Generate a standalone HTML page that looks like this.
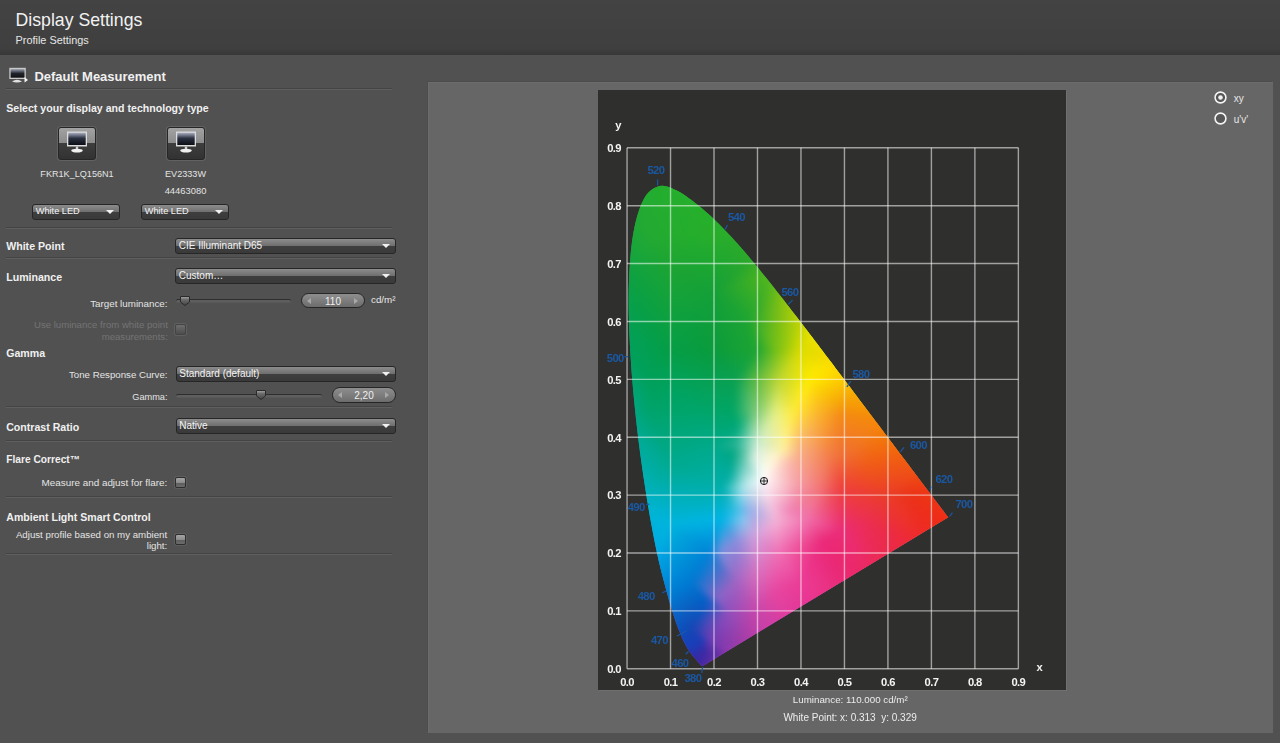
<!DOCTYPE html>
<html><head><meta charset="utf-8"><style>
html,body{margin:0;padding:0;width:1280px;height:743px;overflow:hidden;background:#515151;position:relative;font-family:"Liberation Sans",sans-serif}
.t{position:absolute;white-space:nowrap}
.dd{position:absolute;border:1px solid #262626;border-radius:3px;background:linear-gradient(#8c8c8c 0%,#6e6e6e 50%,#3e3e3e 51%,#3a3a3a 100%)}
.arr{position:absolute;width:0;height:0;border-left:4px solid transparent;border-right:4px solid transparent;border-top:4.5px solid #f0f0f0}
.spin{position:absolute;border:1px solid #262626;background:linear-gradient(#8e8e8e,#6c6c6c)}
.sarr{position:absolute;width:0;height:0;border-top:3px solid transparent;border-bottom:3px solid transparent}
.sarr.l{border-right:4px solid #a8a8a8}
.sarr.r{border-left:4px solid #a8a8a8}
.cb{position:absolute;width:9px;height:9px;border:1px solid #2e2e2e;border-radius:2px;background:linear-gradient(#a4a4a4 0%,#8c8c8c 50%,#5c5c5c 52%,#6c6c6c 100%);box-shadow:0 0 0 1px #5e5e5e}
</style></head><body>
<div style="position:absolute;left:0;top:0;width:1280px;height:55px;background:linear-gradient(#434343,#3f3f3f 88%,#373737)"></div><div class="t" style="left:15.50px;top:11.72px;font-size:17.7px;line-height:17.7px;color:#f2f2f2;">Display Settings</div>
<div class="t" style="left:15.50px;top:34.77px;font-size:10.9px;line-height:10.9px;color:#e6e6e6;">Profile Settings</div>
<svg style="position:absolute;left:8px;top:66px" width="22" height="18" viewBox="0 0 22 18">
<defs><linearGradient id="ms" x1="0" y1="0" x2="0" y2="1"><stop offset="0" stop-color="#9aa0b0"/><stop offset="0.5" stop-color="#22242c"/><stop offset="1" stop-color="#101014"/></linearGradient></defs>
<rect x="1.3" y="1.8" width="16.5" height="11.2" fill="#c8c8c8"/>
<rect x="2.6" y="3.1" width="13.9" height="8.6" fill="url(#ms)"/>
<path d="M4 15.5 Q9 12 14 15.5 Q9 17.5 4 15.5Z" fill="#e0e0e0"/>
<path d="M16.5 11 L20 14 L16.5 16.5Z" fill="#f4f4f4"/>
</svg><div class="t" style="left:34.40px;top:69.80px;font-size:13.0px;line-height:13.0px;color:#f0f0f0;font-weight:bold;">Default Measurement</div>
<div style="position:absolute;left:6px;top:88px;width:386px;height:1px;background:#444"></div><div style="position:absolute;left:6px;top:89px;width:386px;height:1px;background:#5f5f5f"></div>
<div class="t" style="left:6.20px;top:102.83px;font-size:10.6px;line-height:10.6px;color:#f0f0f0;font-weight:bold;">Select your display and technology type</div>
<div style="position:absolute;left:58px;top:127px;width:36px;height:31px;border:1px solid #262626;border-radius:3px;background:linear-gradient(#a2a2a2 0%,#8c8c8c 47%,#3e3e3e 48%,#323232 100%);box-shadow:0 0 0 1px #626262"></div>
<svg style="position:absolute;left:58px;top:127px" width="38" height="33" viewBox="0 0 38 33">
<defs><linearGradient id="scr58" x1="0" y1="0" x2="0" y2="1"><stop offset="0" stop-color="#a8acc0"/><stop offset="0.45" stop-color="#2a3040"/><stop offset="1" stop-color="#0c0e16"/></linearGradient></defs>
<rect x="9" y="4.5" width="20" height="15" fill="#dcdcdc"/>
<rect x="10.3" y="5.8" width="17.4" height="12.2" fill="url(#scr58)"/>
<rect x="17.8" y="19.5" width="2.4" height="3" fill="#d0d0d0"/>
<ellipse cx="19" cy="23.6" rx="5.8" ry="1.9" fill="#f0f0f0"/>
</svg>
<div style="position:absolute;left:167px;top:127px;width:36px;height:31px;border:1px solid #262626;border-radius:3px;background:linear-gradient(#a2a2a2 0%,#8c8c8c 47%,#3e3e3e 48%,#323232 100%);box-shadow:0 0 0 1px #626262"></div>
<svg style="position:absolute;left:167px;top:127px" width="38" height="33" viewBox="0 0 38 33">
<defs><linearGradient id="scr167" x1="0" y1="0" x2="0" y2="1"><stop offset="0" stop-color="#a8acc0"/><stop offset="0.45" stop-color="#2a3040"/><stop offset="1" stop-color="#0c0e16"/></linearGradient></defs>
<rect x="9" y="4.5" width="20" height="15" fill="#dcdcdc"/>
<rect x="10.3" y="5.8" width="17.4" height="12.2" fill="url(#scr167)"/>
<rect x="17.8" y="19.5" width="2.4" height="3" fill="#d0d0d0"/>
<ellipse cx="19" cy="23.6" rx="5.8" ry="1.9" fill="#f0f0f0"/>
</svg>
<div class="t" style="left:-123.00px;width:400px;text-align:center;top:169.50px;font-size:9.1px;line-height:9.1px;color:#e4e4e4;">FKR1K_LQ156N1</div>
<div class="t" style="left:-14.50px;width:400px;text-align:center;top:169.50px;font-size:9.1px;line-height:9.1px;color:#e4e4e4;">EV2333W</div>
<div class="t" style="left:-14.50px;width:400px;text-align:center;top:185.74px;font-size:9.4px;line-height:9.4px;color:#e4e4e4;">44463080</div>
<div class="dd" style="left:32px;top:203.5px;width:86px;height:14.0px"></div>
<div class="t" style="left:35.80px;top:207.23px;font-size:9.2px;line-height:9.2px;color:#f4f4f4;">White LED</div>
<div class="arr" style="left:106px;top:209.5px"></div>
<div class="dd" style="left:141px;top:203.5px;width:86px;height:14.0px"></div>
<div class="t" style="left:144.80px;top:207.23px;font-size:9.2px;line-height:9.2px;color:#f4f4f4;">White LED</div>
<div class="arr" style="left:215px;top:209.5px"></div>
<div style="position:absolute;left:6px;top:226.5px;width:386px;height:1px;background:#444"></div><div style="position:absolute;left:6px;top:227.5px;width:386px;height:1px;background:#5f5f5f"></div>
<div class="t" style="left:6.20px;top:241.33px;font-size:10.6px;line-height:10.6px;color:#f0f0f0;font-weight:bold;">White Point</div>
<div class="dd" style="left:175px;top:238px;width:219px;height:14px"></div>
<div class="t" style="left:178.80px;top:241.06px;font-size:10px;line-height:10px;color:#f4f4f4;">CIE Illuminant D65</div>
<div class="arr" style="left:382px;top:244.0px"></div>
<div style="position:absolute;left:6px;top:257px;width:386px;height:1px;background:#444"></div><div style="position:absolute;left:6px;top:258px;width:386px;height:1px;background:#5f5f5f"></div>
<div class="t" style="left:6.20px;top:272.03px;font-size:10.6px;line-height:10.6px;color:#f0f0f0;font-weight:bold;">Luminance</div>
<div class="dd" style="left:175px;top:268px;width:219px;height:14px"></div>
<div class="t" style="left:178.80px;top:271.06px;font-size:10px;line-height:10px;color:#f4f4f4;">Custom…</div>
<div class="arr" style="left:382px;top:274.0px"></div>
<div class="t" style="right:1112.50px;text-align:right;top:298.60px;font-size:9.8px;line-height:9.8px;color:#e4e4e4;">Target luminance:</div>
<div style="position:absolute;left:176px;top:299.0px;width:115px;height:3px;border-radius:2px;background:#5e5e5e;box-shadow:inset 0 1px 0 #2e2e2e, 0 1px 0 #585858"></div>
<svg style="position:absolute;left:179px;top:294.5px" width="12" height="12" viewBox="0 0 12 12"><defs><linearGradient id="th176" x1="0" y1="0" x2="0" y2="1"><stop offset="0" stop-color="#a8a8a8"/><stop offset="0.35" stop-color="#6a6a6a"/><stop offset="1" stop-color="#444"/></linearGradient></defs><path d="M1.5 1.5 H10.5 V7 L6 10.5 L1.5 7Z" fill="url(#th176)" stroke="#2a2a2a" stroke-width="1"/></svg>
<div class="spin" style="left:301px;top:292.8px;width:62px;height:13.599999999999966px;border-radius:7.799999999999983px"></div>
<div class="sarr l" style="left:307px;top:297.6px"></div><div class="sarr r" style="left:354px;top:297.6px"></div>
<div class="t" style="left:133.00px;width:400px;text-align:center;top:296.81px;font-size:10px;line-height:10px;color:#f0f0f0;">110</div>
<div class="t" style="left:371.00px;top:294.90px;font-size:9.8px;line-height:9.8px;color:#e8e8e8;">cd/m²</div>
<div class="t" style="right:1112.20px;text-align:right;top:319.67px;font-size:9.6px;line-height:9.6px;color:#747474;">Use luminance from white point</div>
<div class="t" style="right:1112.20px;text-align:right;top:331.57px;font-size:9.6px;line-height:9.6px;color:#747474;">measurements:</div>
<div style="position:absolute;left:175px;top:324px;width:9px;height:9px;border-radius:2px;background:linear-gradient(#6e6e6e,#4c4c4c);border:1px solid #444;box-shadow:0 0 0 1px #606060"></div><div class="t" style="left:6.20px;top:347.93px;font-size:10.6px;line-height:10.6px;color:#f0f0f0;font-weight:bold;">Gamma</div>
<div class="t" style="right:1112.50px;text-align:right;top:370.19px;font-size:9.7px;line-height:9.7px;color:#e4e4e4;">Tone Response Curve:</div>
<div class="dd" style="left:175.5px;top:365.6px;width:218.5px;height:14.599999999999966px"></div>
<div class="t" style="left:179.30px;top:369.09px;font-size:10px;line-height:10px;color:#f4f4f4;">Standard (default)</div>
<div class="arr" style="left:382px;top:371.9px"></div>
<div class="t" style="right:1112.50px;text-align:right;top:392.51px;font-size:9.2px;line-height:9.2px;color:#e4e4e4;">Gamma:</div>
<div style="position:absolute;left:176px;top:393.5px;width:146px;height:3px;border-radius:2px;background:#5e5e5e;box-shadow:inset 0 1px 0 #2e2e2e, 0 1px 0 #585858"></div>
<svg style="position:absolute;left:255px;top:389px" width="12" height="12" viewBox="0 0 12 12"><defs><linearGradient id="th176" x1="0" y1="0" x2="0" y2="1"><stop offset="0" stop-color="#a8a8a8"/><stop offset="0.35" stop-color="#6a6a6a"/><stop offset="1" stop-color="#444"/></linearGradient></defs><path d="M1.5 1.5 H10.5 V7 L6 10.5 L1.5 7Z" fill="url(#th176)" stroke="#2a2a2a" stroke-width="1"/></svg>
<div class="spin" style="left:332px;top:387px;width:62px;height:13.5px;border-radius:7.75px"></div>
<div class="sarr l" style="left:338px;top:391.75px"></div><div class="sarr r" style="left:385px;top:391.75px"></div>
<div class="t" style="left:164.00px;width:400px;text-align:center;top:390.94px;font-size:10px;line-height:10px;color:#f0f0f0;">2,20</div>
<div style="position:absolute;left:6px;top:406px;width:386px;height:1px;background:#444"></div><div style="position:absolute;left:6px;top:407px;width:386px;height:1px;background:#5f5f5f"></div>
<div class="t" style="left:6.20px;top:421.93px;font-size:10.6px;line-height:10.6px;color:#f0f0f0;font-weight:bold;">Contrast Ratio</div>
<div class="dd" style="left:175.5px;top:418.2px;width:218.5px;height:13.600000000000023px"></div>
<div class="t" style="left:179.30px;top:420.97px;font-size:10px;line-height:10px;color:#f4f4f4;">Native</div>
<div class="arr" style="left:382px;top:424.0px"></div>
<div style="position:absolute;left:6px;top:439.5px;width:386px;height:1px;background:#444"></div><div style="position:absolute;left:6px;top:440.5px;width:386px;height:1px;background:#5f5f5f"></div>
<div class="t" style="left:6.30px;top:455.07px;font-size:10.2px;line-height:10.2px;color:#f0f0f0;font-weight:bold;">Flare Correct™</div>
<div class="t" style="right:1112.80px;text-align:right;top:478.42px;font-size:9.9px;line-height:9.9px;color:#e4e4e4;">Measure and adjust for flare:</div>
<div class="cb" style="left:175px;top:477px"></div>
<div style="position:absolute;left:6px;top:495.5px;width:386px;height:1px;background:#444"></div><div style="position:absolute;left:6px;top:496.5px;width:386px;height:1px;background:#5f5f5f"></div>
<div class="t" style="left:6.30px;top:511.55px;font-size:10.57px;line-height:10.57px;color:#f0f0f0;font-weight:bold;">Ambient Light Smart Control</div>
<div class="t" style="right:1112.80px;text-align:right;top:529.99px;font-size:9.7px;line-height:9.7px;color:#e4e4e4;">Adjust profile based on my ambient</div>
<div class="t" style="right:1112.80px;text-align:right;top:540.99px;font-size:9.7px;line-height:9.7px;color:#e4e4e4;">light:</div>
<div class="cb" style="left:175px;top:534px"></div>
<div style="position:absolute;left:6px;top:553px;width:386px;height:1px;background:#444"></div><div style="position:absolute;left:6px;top:554px;width:386px;height:1px;background:#5f5f5f"></div>
<div style="position:absolute;left:428px;top:82px;width:845px;height:651px;background:#666666;box-shadow:-1px -1px 0 #4c4c4c, inset 1px 1px 0 #6c6c6c"></div><svg style="position:absolute;left:1212px;top:89px" width="18" height="38" viewBox="0 0 18 38">
<circle cx="8.5" cy="8.5" r="5.4" fill="#555" stroke="#f4f4f4" stroke-width="1.6"/>
<circle cx="8.5" cy="8.5" r="2.3" fill="#f0f0f0"/>
<circle cx="8.5" cy="29.5" r="5.4" fill="#585858" stroke="#f4f4f4" stroke-width="1.6"/>
</svg><div class="t" style="left:1233.70px;top:94.03px;font-size:10px;line-height:10px;color:#e8e8e8;">xy</div>
<div class="t" style="left:1233.70px;top:114.73px;font-size:10px;line-height:10px;color:#e8e8e8;">u'v'</div>
<div style="position:absolute;left:598px;top:90px;width:468px;height:600px;background:#2f2f2e;box-shadow:1px 1px 0 #707070"></div><svg style="position:absolute;left:598px;top:90px" width="468" height="600" viewBox="0 0 468 600">
<defs><linearGradient id="gfb1" gradientUnits="userSpaceOnUse" x1="0" y1="98.3" x2="0" y2="578.8"><stop offset="0" stop-color="#28aa30"/><stop offset="0.35" stop-color="#06a05a"/><stop offset="0.58" stop-color="#00aa9a"/><stop offset="0.76" stop-color="#00a8e0"/><stop offset="1" stop-color="#3030b0"/></linearGradient><radialGradient id="gfm" gradientUnits="userSpaceOnUse" cx="203.0" cy="509.3" r="170"><stop offset="0" stop-color="#e83c9c" stop-opacity="1"/><stop offset="0.55" stop-color="#e83c9c" stop-opacity="0.9"/><stop offset="1" stop-color="#e83c9c" stop-opacity="0"/></radialGradient><radialGradient id="gfr" gradientUnits="userSpaceOnUse" cx="324.7" cy="416.7" r="150"><stop offset="0" stop-color="#ef3a1c" stop-opacity="1"/><stop offset="0.6" stop-color="#ef3a1c" stop-opacity="0.9"/><stop offset="1" stop-color="#ef3a1c" stop-opacity="0"/></radialGradient><radialGradient id="gfo" gradientUnits="userSpaceOnUse" cx="272.5" cy="335.7" r="85"><stop offset="0" stop-color="#f58a00" stop-opacity="1"/><stop offset="0.5" stop-color="#f58a00" stop-opacity="0.8"/><stop offset="1" stop-color="#f58a00" stop-opacity="0"/></radialGradient><radialGradient id="gfy" gradientUnits="userSpaceOnUse" cx="220.4" cy="277.8" r="80"><stop offset="0" stop-color="#ffe400" stop-opacity="1"/><stop offset="0.5" stop-color="#ffe400" stop-opacity="0.85"/><stop offset="1" stop-color="#ffe400" stop-opacity="0"/></radialGradient><radialGradient id="gfw" gradientUnits="userSpaceOnUse" cx="165.1" cy="387.8" r="70"><stop offset="0" stop-color="#ffffff" stop-opacity="1"/><stop offset="0.35" stop-color="#ffffff" stop-opacity="0.8"/><stop offset="1" stop-color="#ffffff" stop-opacity="0"/></radialGradient></defs>
<path d="M104.75 575.91 L104.74 575.90 L104.74 575.90 L104.73 575.90 L104.72 575.90 L104.72 575.90 L104.71 575.91 L104.69 575.91 L104.68 575.92 L104.66 575.93 L104.65 575.95 L104.63 575.96 L104.62 575.96 L104.60 575.97 L104.59 575.97 L104.58 575.96 L104.56 575.96 L104.55 575.96 L104.53 575.96 L104.51 575.97 L104.49 575.98 L104.47 575.99 L104.45 576.00 L104.42 576.01 L104.40 576.02 L104.38 576.02 L104.36 576.03 L104.34 576.02 L104.32 576.02 L104.29 576.02 L104.27 576.02 L104.24 576.02 L104.22 576.02 L104.19 576.02 L104.16 576.02 L104.13 576.02 L104.10 576.02 L104.06 576.02 L104.03 576.03 L104.00 576.03 L103.96 576.03 L103.92 576.03 L103.88 576.02 L103.84 576.01 L103.79 575.98 L103.74 575.96 L103.69 575.93 L103.64 575.89 L103.57 575.85 L103.51 575.80 L103.43 575.74 L103.35 575.67 L103.27 575.60 L103.19 575.53 L103.10 575.44 L103.01 575.35 L102.91 575.26 L102.82 575.16 L102.71 575.05 L102.61 574.93 L102.49 574.81 L102.36 574.67 L102.23 574.52 L102.08 574.36 L101.93 574.19 L101.78 574.01 L101.62 573.82 L101.45 573.62 L101.28 573.42 L101.11 573.20 L100.93 572.97 L100.73 572.74 L100.53 572.49 L100.32 572.24 L100.10 571.98 L99.87 571.71 L99.63 571.43 L99.37 571.13 L99.10 570.81 L98.81 570.48 L98.50 570.13 L98.18 569.76 L97.85 569.37 L97.50 568.97 L97.14 568.55 L96.77 568.12 L96.39 567.68 L95.99 567.22 L95.58 566.73 L95.15 566.22 L94.70 565.66 L94.24 565.07 L93.76 564.46 L93.26 563.82 L92.75 563.14 L92.21 562.40 L91.66 561.61 L91.10 560.78 L90.52 559.94 L89.93 559.05 L89.31 558.07 L88.66 556.97 L87.97 555.70 L87.23 554.31 L86.46 552.82 L85.65 551.20 L84.81 549.43 L83.93 547.49 L83.01 545.34 L82.06 543.03 L81.07 540.58 L80.04 537.96 L78.98 535.11 L77.87 531.99 L76.70 528.55 L75.50 524.84 L74.24 520.89 L72.95 516.68 L71.60 512.15 L70.20 507.26 L68.75 501.98 L67.22 496.34 L65.62 490.37 L63.97 484.05 L62.29 477.34 L60.60 470.20 L58.92 462.61 L57.24 454.55 L55.54 446.05 L53.84 437.12 L52.13 427.79 L50.45 418.08 L48.79 408.02 L47.13 397.51 L45.46 386.49 L43.81 375.09 L42.21 363.44 L40.68 351.67 L39.27 339.89 L37.94 327.97 L36.66 315.78 L35.46 303.46 L34.37 291.15 L33.41 278.99 L32.62 267.12 L31.96 255.44 L31.41 243.81 L30.99 232.33 L30.73 221.10 L30.64 210.20 L30.75 199.74 L31.04 189.60 L31.49 179.71 L32.12 170.15 L32.93 161.03 L33.92 152.45 L35.09 144.51 L36.48 137.15 L38.07 130.29 L39.84 123.96 L41.76 118.22 L43.81 113.13 L45.96 108.73 L48.24 105.09 L50.69 102.18 L53.25 99.91 L55.91 98.20 L58.62 96.96 L61.36 96.11 L64.13 95.78 L66.98 96.05 L69.89 96.79 L72.83 97.87 L75.77 99.16 L78.70 100.51 L81.64 102.02 L84.59 103.80 L87.56 105.78 L90.51 107.90 L93.43 110.09 L96.31 112.26 L99.15 114.45 L101.95 116.72 L104.72 119.04 L107.47 121.43 L110.20 123.86 L112.92 126.33 L115.62 128.85 L118.30 131.41 L120.96 134.03 L123.60 136.69 L126.24 139.39 L128.88 142.14 L131.52 144.93 L134.15 147.77 L136.77 150.65 L139.39 153.57 L142.01 156.52 L144.62 159.50 L147.22 162.51 L149.82 165.56 L152.42 168.64 L155.01 171.75 L157.60 174.88 L160.19 178.03 L162.77 181.20 L165.36 184.39 L167.95 187.61 L170.53 190.84 L173.12 194.10 L175.71 197.36 L178.30 200.64 L180.90 203.95 L183.49 207.27 L186.09 210.60 L188.68 213.93 L191.27 217.28 L193.86 220.63 L196.44 223.99 L199.02 227.36 L201.60 230.74 L204.18 234.11 L206.75 237.48 L209.33 240.85 L211.90 244.22 L214.47 247.60 L217.04 250.97 L219.60 254.33 L222.14 257.68 L224.68 261.03 L227.21 264.38 L229.73 267.72 L232.25 271.05 L234.75 274.36 L237.23 277.66 L239.71 280.94 L242.17 284.21 L244.62 287.46 L247.06 290.70 L249.48 293.92 L251.88 297.11 L254.27 300.27 L256.64 303.42 L259.00 306.55 L261.33 309.65 L263.64 312.72 L265.93 315.75 L268.19 318.75 L270.44 321.71 L272.66 324.65 L274.86 327.55 L277.02 330.41 L279.15 333.23 L281.24 336.01 L283.31 338.76 L285.34 341.47 L287.34 344.13 L289.29 346.73 L291.19 349.27 L293.04 351.73 L294.85 354.12 L296.61 356.45 L298.33 358.73 L300.01 360.97 L301.67 363.16 L303.30 365.32 L304.89 367.44 L306.46 369.51 L307.98 371.52 L309.46 373.48 L310.89 375.37 L312.27 377.20 L313.61 378.96 L314.90 380.66 L316.15 382.30 L317.37 383.90 L318.54 385.45 L319.67 386.95 L320.77 388.40 L321.82 389.80 L322.83 391.16 L323.81 392.46 L324.76 393.73 L325.67 394.94 L326.54 396.10 L327.38 397.22 L328.18 398.29 L328.96 399.33 L329.71 400.33 L330.44 401.29 L331.14 402.20 L331.80 403.08 L332.45 403.92 L333.07 404.74 L333.67 405.54 L334.25 406.30 L334.81 407.04 L335.34 407.75 L335.85 408.44 L336.36 409.11 L336.84 409.76 L337.31 410.38 L337.74 410.95 L338.15 411.51 L338.57 412.06 L339.02 412.65 L339.50 413.29 L340.06 414.04 L340.69 414.89 L341.35 415.76 L341.98 416.60 L342.52 417.32 L342.93 417.87 L343.17 418.18 L343.28 418.31 L343.30 418.33 L343.30 418.31 L343.32 418.33 L343.41 418.44 L343.57 418.65 L343.75 418.89 L343.96 419.17 L344.18 419.47 L344.44 419.81 L344.71 420.18 L345.04 420.61 L345.41 421.10 L345.80 421.63 L346.20 422.15 L346.57 422.65 L346.89 423.08 L347.16 423.44 L347.40 423.76 L347.62 424.05 L347.82 424.32 L348.01 424.57 L348.19 424.81 L348.37 425.04 L348.52 425.26 L348.67 425.46 L348.81 425.64 L348.94 425.81 L349.06 425.97 L349.19 426.11 L349.30 426.24 L349.41 426.36 L349.51 426.46 L349.61 426.56 L349.71 426.67 L349.82 426.77 L349.93 426.87 L350.04 426.97 L350.14 427.06 L350.22 427.13 L350.28 427.19Z" fill="url(#gfb1)"/><path d="M104.75 575.91 L104.74 575.90 L104.74 575.90 L104.73 575.90 L104.72 575.90 L104.72 575.90 L104.71 575.91 L104.69 575.91 L104.68 575.92 L104.66 575.93 L104.65 575.95 L104.63 575.96 L104.62 575.96 L104.60 575.97 L104.59 575.97 L104.58 575.96 L104.56 575.96 L104.55 575.96 L104.53 575.96 L104.51 575.97 L104.49 575.98 L104.47 575.99 L104.45 576.00 L104.42 576.01 L104.40 576.02 L104.38 576.02 L104.36 576.03 L104.34 576.02 L104.32 576.02 L104.29 576.02 L104.27 576.02 L104.24 576.02 L104.22 576.02 L104.19 576.02 L104.16 576.02 L104.13 576.02 L104.10 576.02 L104.06 576.02 L104.03 576.03 L104.00 576.03 L103.96 576.03 L103.92 576.03 L103.88 576.02 L103.84 576.01 L103.79 575.98 L103.74 575.96 L103.69 575.93 L103.64 575.89 L103.57 575.85 L103.51 575.80 L103.43 575.74 L103.35 575.67 L103.27 575.60 L103.19 575.53 L103.10 575.44 L103.01 575.35 L102.91 575.26 L102.82 575.16 L102.71 575.05 L102.61 574.93 L102.49 574.81 L102.36 574.67 L102.23 574.52 L102.08 574.36 L101.93 574.19 L101.78 574.01 L101.62 573.82 L101.45 573.62 L101.28 573.42 L101.11 573.20 L100.93 572.97 L100.73 572.74 L100.53 572.49 L100.32 572.24 L100.10 571.98 L99.87 571.71 L99.63 571.43 L99.37 571.13 L99.10 570.81 L98.81 570.48 L98.50 570.13 L98.18 569.76 L97.85 569.37 L97.50 568.97 L97.14 568.55 L96.77 568.12 L96.39 567.68 L95.99 567.22 L95.58 566.73 L95.15 566.22 L94.70 565.66 L94.24 565.07 L93.76 564.46 L93.26 563.82 L92.75 563.14 L92.21 562.40 L91.66 561.61 L91.10 560.78 L90.52 559.94 L89.93 559.05 L89.31 558.07 L88.66 556.97 L87.97 555.70 L87.23 554.31 L86.46 552.82 L85.65 551.20 L84.81 549.43 L83.93 547.49 L83.01 545.34 L82.06 543.03 L81.07 540.58 L80.04 537.96 L78.98 535.11 L77.87 531.99 L76.70 528.55 L75.50 524.84 L74.24 520.89 L72.95 516.68 L71.60 512.15 L70.20 507.26 L68.75 501.98 L67.22 496.34 L65.62 490.37 L63.97 484.05 L62.29 477.34 L60.60 470.20 L58.92 462.61 L57.24 454.55 L55.54 446.05 L53.84 437.12 L52.13 427.79 L50.45 418.08 L48.79 408.02 L47.13 397.51 L45.46 386.49 L43.81 375.09 L42.21 363.44 L40.68 351.67 L39.27 339.89 L37.94 327.97 L36.66 315.78 L35.46 303.46 L34.37 291.15 L33.41 278.99 L32.62 267.12 L31.96 255.44 L31.41 243.81 L30.99 232.33 L30.73 221.10 L30.64 210.20 L30.75 199.74 L31.04 189.60 L31.49 179.71 L32.12 170.15 L32.93 161.03 L33.92 152.45 L35.09 144.51 L36.48 137.15 L38.07 130.29 L39.84 123.96 L41.76 118.22 L43.81 113.13 L45.96 108.73 L48.24 105.09 L50.69 102.18 L53.25 99.91 L55.91 98.20 L58.62 96.96 L61.36 96.11 L64.13 95.78 L66.98 96.05 L69.89 96.79 L72.83 97.87 L75.77 99.16 L78.70 100.51 L81.64 102.02 L84.59 103.80 L87.56 105.78 L90.51 107.90 L93.43 110.09 L96.31 112.26 L99.15 114.45 L101.95 116.72 L104.72 119.04 L107.47 121.43 L110.20 123.86 L112.92 126.33 L115.62 128.85 L118.30 131.41 L120.96 134.03 L123.60 136.69 L126.24 139.39 L128.88 142.14 L131.52 144.93 L134.15 147.77 L136.77 150.65 L139.39 153.57 L142.01 156.52 L144.62 159.50 L147.22 162.51 L149.82 165.56 L152.42 168.64 L155.01 171.75 L157.60 174.88 L160.19 178.03 L162.77 181.20 L165.36 184.39 L167.95 187.61 L170.53 190.84 L173.12 194.10 L175.71 197.36 L178.30 200.64 L180.90 203.95 L183.49 207.27 L186.09 210.60 L188.68 213.93 L191.27 217.28 L193.86 220.63 L196.44 223.99 L199.02 227.36 L201.60 230.74 L204.18 234.11 L206.75 237.48 L209.33 240.85 L211.90 244.22 L214.47 247.60 L217.04 250.97 L219.60 254.33 L222.14 257.68 L224.68 261.03 L227.21 264.38 L229.73 267.72 L232.25 271.05 L234.75 274.36 L237.23 277.66 L239.71 280.94 L242.17 284.21 L244.62 287.46 L247.06 290.70 L249.48 293.92 L251.88 297.11 L254.27 300.27 L256.64 303.42 L259.00 306.55 L261.33 309.65 L263.64 312.72 L265.93 315.75 L268.19 318.75 L270.44 321.71 L272.66 324.65 L274.86 327.55 L277.02 330.41 L279.15 333.23 L281.24 336.01 L283.31 338.76 L285.34 341.47 L287.34 344.13 L289.29 346.73 L291.19 349.27 L293.04 351.73 L294.85 354.12 L296.61 356.45 L298.33 358.73 L300.01 360.97 L301.67 363.16 L303.30 365.32 L304.89 367.44 L306.46 369.51 L307.98 371.52 L309.46 373.48 L310.89 375.37 L312.27 377.20 L313.61 378.96 L314.90 380.66 L316.15 382.30 L317.37 383.90 L318.54 385.45 L319.67 386.95 L320.77 388.40 L321.82 389.80 L322.83 391.16 L323.81 392.46 L324.76 393.73 L325.67 394.94 L326.54 396.10 L327.38 397.22 L328.18 398.29 L328.96 399.33 L329.71 400.33 L330.44 401.29 L331.14 402.20 L331.80 403.08 L332.45 403.92 L333.07 404.74 L333.67 405.54 L334.25 406.30 L334.81 407.04 L335.34 407.75 L335.85 408.44 L336.36 409.11 L336.84 409.76 L337.31 410.38 L337.74 410.95 L338.15 411.51 L338.57 412.06 L339.02 412.65 L339.50 413.29 L340.06 414.04 L340.69 414.89 L341.35 415.76 L341.98 416.60 L342.52 417.32 L342.93 417.87 L343.17 418.18 L343.28 418.31 L343.30 418.33 L343.30 418.31 L343.32 418.33 L343.41 418.44 L343.57 418.65 L343.75 418.89 L343.96 419.17 L344.18 419.47 L344.44 419.81 L344.71 420.18 L345.04 420.61 L345.41 421.10 L345.80 421.63 L346.20 422.15 L346.57 422.65 L346.89 423.08 L347.16 423.44 L347.40 423.76 L347.62 424.05 L347.82 424.32 L348.01 424.57 L348.19 424.81 L348.37 425.04 L348.52 425.26 L348.67 425.46 L348.81 425.64 L348.94 425.81 L349.06 425.97 L349.19 426.11 L349.30 426.24 L349.41 426.36 L349.51 426.46 L349.61 426.56 L349.71 426.67 L349.82 426.77 L349.93 426.87 L350.04 426.97 L350.14 427.06 L350.22 427.13 L350.28 427.19Z" fill="url(#gfm)"/><path d="M104.75 575.91 L104.74 575.90 L104.74 575.90 L104.73 575.90 L104.72 575.90 L104.72 575.90 L104.71 575.91 L104.69 575.91 L104.68 575.92 L104.66 575.93 L104.65 575.95 L104.63 575.96 L104.62 575.96 L104.60 575.97 L104.59 575.97 L104.58 575.96 L104.56 575.96 L104.55 575.96 L104.53 575.96 L104.51 575.97 L104.49 575.98 L104.47 575.99 L104.45 576.00 L104.42 576.01 L104.40 576.02 L104.38 576.02 L104.36 576.03 L104.34 576.02 L104.32 576.02 L104.29 576.02 L104.27 576.02 L104.24 576.02 L104.22 576.02 L104.19 576.02 L104.16 576.02 L104.13 576.02 L104.10 576.02 L104.06 576.02 L104.03 576.03 L104.00 576.03 L103.96 576.03 L103.92 576.03 L103.88 576.02 L103.84 576.01 L103.79 575.98 L103.74 575.96 L103.69 575.93 L103.64 575.89 L103.57 575.85 L103.51 575.80 L103.43 575.74 L103.35 575.67 L103.27 575.60 L103.19 575.53 L103.10 575.44 L103.01 575.35 L102.91 575.26 L102.82 575.16 L102.71 575.05 L102.61 574.93 L102.49 574.81 L102.36 574.67 L102.23 574.52 L102.08 574.36 L101.93 574.19 L101.78 574.01 L101.62 573.82 L101.45 573.62 L101.28 573.42 L101.11 573.20 L100.93 572.97 L100.73 572.74 L100.53 572.49 L100.32 572.24 L100.10 571.98 L99.87 571.71 L99.63 571.43 L99.37 571.13 L99.10 570.81 L98.81 570.48 L98.50 570.13 L98.18 569.76 L97.85 569.37 L97.50 568.97 L97.14 568.55 L96.77 568.12 L96.39 567.68 L95.99 567.22 L95.58 566.73 L95.15 566.22 L94.70 565.66 L94.24 565.07 L93.76 564.46 L93.26 563.82 L92.75 563.14 L92.21 562.40 L91.66 561.61 L91.10 560.78 L90.52 559.94 L89.93 559.05 L89.31 558.07 L88.66 556.97 L87.97 555.70 L87.23 554.31 L86.46 552.82 L85.65 551.20 L84.81 549.43 L83.93 547.49 L83.01 545.34 L82.06 543.03 L81.07 540.58 L80.04 537.96 L78.98 535.11 L77.87 531.99 L76.70 528.55 L75.50 524.84 L74.24 520.89 L72.95 516.68 L71.60 512.15 L70.20 507.26 L68.75 501.98 L67.22 496.34 L65.62 490.37 L63.97 484.05 L62.29 477.34 L60.60 470.20 L58.92 462.61 L57.24 454.55 L55.54 446.05 L53.84 437.12 L52.13 427.79 L50.45 418.08 L48.79 408.02 L47.13 397.51 L45.46 386.49 L43.81 375.09 L42.21 363.44 L40.68 351.67 L39.27 339.89 L37.94 327.97 L36.66 315.78 L35.46 303.46 L34.37 291.15 L33.41 278.99 L32.62 267.12 L31.96 255.44 L31.41 243.81 L30.99 232.33 L30.73 221.10 L30.64 210.20 L30.75 199.74 L31.04 189.60 L31.49 179.71 L32.12 170.15 L32.93 161.03 L33.92 152.45 L35.09 144.51 L36.48 137.15 L38.07 130.29 L39.84 123.96 L41.76 118.22 L43.81 113.13 L45.96 108.73 L48.24 105.09 L50.69 102.18 L53.25 99.91 L55.91 98.20 L58.62 96.96 L61.36 96.11 L64.13 95.78 L66.98 96.05 L69.89 96.79 L72.83 97.87 L75.77 99.16 L78.70 100.51 L81.64 102.02 L84.59 103.80 L87.56 105.78 L90.51 107.90 L93.43 110.09 L96.31 112.26 L99.15 114.45 L101.95 116.72 L104.72 119.04 L107.47 121.43 L110.20 123.86 L112.92 126.33 L115.62 128.85 L118.30 131.41 L120.96 134.03 L123.60 136.69 L126.24 139.39 L128.88 142.14 L131.52 144.93 L134.15 147.77 L136.77 150.65 L139.39 153.57 L142.01 156.52 L144.62 159.50 L147.22 162.51 L149.82 165.56 L152.42 168.64 L155.01 171.75 L157.60 174.88 L160.19 178.03 L162.77 181.20 L165.36 184.39 L167.95 187.61 L170.53 190.84 L173.12 194.10 L175.71 197.36 L178.30 200.64 L180.90 203.95 L183.49 207.27 L186.09 210.60 L188.68 213.93 L191.27 217.28 L193.86 220.63 L196.44 223.99 L199.02 227.36 L201.60 230.74 L204.18 234.11 L206.75 237.48 L209.33 240.85 L211.90 244.22 L214.47 247.60 L217.04 250.97 L219.60 254.33 L222.14 257.68 L224.68 261.03 L227.21 264.38 L229.73 267.72 L232.25 271.05 L234.75 274.36 L237.23 277.66 L239.71 280.94 L242.17 284.21 L244.62 287.46 L247.06 290.70 L249.48 293.92 L251.88 297.11 L254.27 300.27 L256.64 303.42 L259.00 306.55 L261.33 309.65 L263.64 312.72 L265.93 315.75 L268.19 318.75 L270.44 321.71 L272.66 324.65 L274.86 327.55 L277.02 330.41 L279.15 333.23 L281.24 336.01 L283.31 338.76 L285.34 341.47 L287.34 344.13 L289.29 346.73 L291.19 349.27 L293.04 351.73 L294.85 354.12 L296.61 356.45 L298.33 358.73 L300.01 360.97 L301.67 363.16 L303.30 365.32 L304.89 367.44 L306.46 369.51 L307.98 371.52 L309.46 373.48 L310.89 375.37 L312.27 377.20 L313.61 378.96 L314.90 380.66 L316.15 382.30 L317.37 383.90 L318.54 385.45 L319.67 386.95 L320.77 388.40 L321.82 389.80 L322.83 391.16 L323.81 392.46 L324.76 393.73 L325.67 394.94 L326.54 396.10 L327.38 397.22 L328.18 398.29 L328.96 399.33 L329.71 400.33 L330.44 401.29 L331.14 402.20 L331.80 403.08 L332.45 403.92 L333.07 404.74 L333.67 405.54 L334.25 406.30 L334.81 407.04 L335.34 407.75 L335.85 408.44 L336.36 409.11 L336.84 409.76 L337.31 410.38 L337.74 410.95 L338.15 411.51 L338.57 412.06 L339.02 412.65 L339.50 413.29 L340.06 414.04 L340.69 414.89 L341.35 415.76 L341.98 416.60 L342.52 417.32 L342.93 417.87 L343.17 418.18 L343.28 418.31 L343.30 418.33 L343.30 418.31 L343.32 418.33 L343.41 418.44 L343.57 418.65 L343.75 418.89 L343.96 419.17 L344.18 419.47 L344.44 419.81 L344.71 420.18 L345.04 420.61 L345.41 421.10 L345.80 421.63 L346.20 422.15 L346.57 422.65 L346.89 423.08 L347.16 423.44 L347.40 423.76 L347.62 424.05 L347.82 424.32 L348.01 424.57 L348.19 424.81 L348.37 425.04 L348.52 425.26 L348.67 425.46 L348.81 425.64 L348.94 425.81 L349.06 425.97 L349.19 426.11 L349.30 426.24 L349.41 426.36 L349.51 426.46 L349.61 426.56 L349.71 426.67 L349.82 426.77 L349.93 426.87 L350.04 426.97 L350.14 427.06 L350.22 427.13 L350.28 427.19Z" fill="url(#gfr)"/><path d="M104.75 575.91 L104.74 575.90 L104.74 575.90 L104.73 575.90 L104.72 575.90 L104.72 575.90 L104.71 575.91 L104.69 575.91 L104.68 575.92 L104.66 575.93 L104.65 575.95 L104.63 575.96 L104.62 575.96 L104.60 575.97 L104.59 575.97 L104.58 575.96 L104.56 575.96 L104.55 575.96 L104.53 575.96 L104.51 575.97 L104.49 575.98 L104.47 575.99 L104.45 576.00 L104.42 576.01 L104.40 576.02 L104.38 576.02 L104.36 576.03 L104.34 576.02 L104.32 576.02 L104.29 576.02 L104.27 576.02 L104.24 576.02 L104.22 576.02 L104.19 576.02 L104.16 576.02 L104.13 576.02 L104.10 576.02 L104.06 576.02 L104.03 576.03 L104.00 576.03 L103.96 576.03 L103.92 576.03 L103.88 576.02 L103.84 576.01 L103.79 575.98 L103.74 575.96 L103.69 575.93 L103.64 575.89 L103.57 575.85 L103.51 575.80 L103.43 575.74 L103.35 575.67 L103.27 575.60 L103.19 575.53 L103.10 575.44 L103.01 575.35 L102.91 575.26 L102.82 575.16 L102.71 575.05 L102.61 574.93 L102.49 574.81 L102.36 574.67 L102.23 574.52 L102.08 574.36 L101.93 574.19 L101.78 574.01 L101.62 573.82 L101.45 573.62 L101.28 573.42 L101.11 573.20 L100.93 572.97 L100.73 572.74 L100.53 572.49 L100.32 572.24 L100.10 571.98 L99.87 571.71 L99.63 571.43 L99.37 571.13 L99.10 570.81 L98.81 570.48 L98.50 570.13 L98.18 569.76 L97.85 569.37 L97.50 568.97 L97.14 568.55 L96.77 568.12 L96.39 567.68 L95.99 567.22 L95.58 566.73 L95.15 566.22 L94.70 565.66 L94.24 565.07 L93.76 564.46 L93.26 563.82 L92.75 563.14 L92.21 562.40 L91.66 561.61 L91.10 560.78 L90.52 559.94 L89.93 559.05 L89.31 558.07 L88.66 556.97 L87.97 555.70 L87.23 554.31 L86.46 552.82 L85.65 551.20 L84.81 549.43 L83.93 547.49 L83.01 545.34 L82.06 543.03 L81.07 540.58 L80.04 537.96 L78.98 535.11 L77.87 531.99 L76.70 528.55 L75.50 524.84 L74.24 520.89 L72.95 516.68 L71.60 512.15 L70.20 507.26 L68.75 501.98 L67.22 496.34 L65.62 490.37 L63.97 484.05 L62.29 477.34 L60.60 470.20 L58.92 462.61 L57.24 454.55 L55.54 446.05 L53.84 437.12 L52.13 427.79 L50.45 418.08 L48.79 408.02 L47.13 397.51 L45.46 386.49 L43.81 375.09 L42.21 363.44 L40.68 351.67 L39.27 339.89 L37.94 327.97 L36.66 315.78 L35.46 303.46 L34.37 291.15 L33.41 278.99 L32.62 267.12 L31.96 255.44 L31.41 243.81 L30.99 232.33 L30.73 221.10 L30.64 210.20 L30.75 199.74 L31.04 189.60 L31.49 179.71 L32.12 170.15 L32.93 161.03 L33.92 152.45 L35.09 144.51 L36.48 137.15 L38.07 130.29 L39.84 123.96 L41.76 118.22 L43.81 113.13 L45.96 108.73 L48.24 105.09 L50.69 102.18 L53.25 99.91 L55.91 98.20 L58.62 96.96 L61.36 96.11 L64.13 95.78 L66.98 96.05 L69.89 96.79 L72.83 97.87 L75.77 99.16 L78.70 100.51 L81.64 102.02 L84.59 103.80 L87.56 105.78 L90.51 107.90 L93.43 110.09 L96.31 112.26 L99.15 114.45 L101.95 116.72 L104.72 119.04 L107.47 121.43 L110.20 123.86 L112.92 126.33 L115.62 128.85 L118.30 131.41 L120.96 134.03 L123.60 136.69 L126.24 139.39 L128.88 142.14 L131.52 144.93 L134.15 147.77 L136.77 150.65 L139.39 153.57 L142.01 156.52 L144.62 159.50 L147.22 162.51 L149.82 165.56 L152.42 168.64 L155.01 171.75 L157.60 174.88 L160.19 178.03 L162.77 181.20 L165.36 184.39 L167.95 187.61 L170.53 190.84 L173.12 194.10 L175.71 197.36 L178.30 200.64 L180.90 203.95 L183.49 207.27 L186.09 210.60 L188.68 213.93 L191.27 217.28 L193.86 220.63 L196.44 223.99 L199.02 227.36 L201.60 230.74 L204.18 234.11 L206.75 237.48 L209.33 240.85 L211.90 244.22 L214.47 247.60 L217.04 250.97 L219.60 254.33 L222.14 257.68 L224.68 261.03 L227.21 264.38 L229.73 267.72 L232.25 271.05 L234.75 274.36 L237.23 277.66 L239.71 280.94 L242.17 284.21 L244.62 287.46 L247.06 290.70 L249.48 293.92 L251.88 297.11 L254.27 300.27 L256.64 303.42 L259.00 306.55 L261.33 309.65 L263.64 312.72 L265.93 315.75 L268.19 318.75 L270.44 321.71 L272.66 324.65 L274.86 327.55 L277.02 330.41 L279.15 333.23 L281.24 336.01 L283.31 338.76 L285.34 341.47 L287.34 344.13 L289.29 346.73 L291.19 349.27 L293.04 351.73 L294.85 354.12 L296.61 356.45 L298.33 358.73 L300.01 360.97 L301.67 363.16 L303.30 365.32 L304.89 367.44 L306.46 369.51 L307.98 371.52 L309.46 373.48 L310.89 375.37 L312.27 377.20 L313.61 378.96 L314.90 380.66 L316.15 382.30 L317.37 383.90 L318.54 385.45 L319.67 386.95 L320.77 388.40 L321.82 389.80 L322.83 391.16 L323.81 392.46 L324.76 393.73 L325.67 394.94 L326.54 396.10 L327.38 397.22 L328.18 398.29 L328.96 399.33 L329.71 400.33 L330.44 401.29 L331.14 402.20 L331.80 403.08 L332.45 403.92 L333.07 404.74 L333.67 405.54 L334.25 406.30 L334.81 407.04 L335.34 407.75 L335.85 408.44 L336.36 409.11 L336.84 409.76 L337.31 410.38 L337.74 410.95 L338.15 411.51 L338.57 412.06 L339.02 412.65 L339.50 413.29 L340.06 414.04 L340.69 414.89 L341.35 415.76 L341.98 416.60 L342.52 417.32 L342.93 417.87 L343.17 418.18 L343.28 418.31 L343.30 418.33 L343.30 418.31 L343.32 418.33 L343.41 418.44 L343.57 418.65 L343.75 418.89 L343.96 419.17 L344.18 419.47 L344.44 419.81 L344.71 420.18 L345.04 420.61 L345.41 421.10 L345.80 421.63 L346.20 422.15 L346.57 422.65 L346.89 423.08 L347.16 423.44 L347.40 423.76 L347.62 424.05 L347.82 424.32 L348.01 424.57 L348.19 424.81 L348.37 425.04 L348.52 425.26 L348.67 425.46 L348.81 425.64 L348.94 425.81 L349.06 425.97 L349.19 426.11 L349.30 426.24 L349.41 426.36 L349.51 426.46 L349.61 426.56 L349.71 426.67 L349.82 426.77 L349.93 426.87 L350.04 426.97 L350.14 427.06 L350.22 427.13 L350.28 427.19Z" fill="url(#gfo)"/><path d="M104.75 575.91 L104.74 575.90 L104.74 575.90 L104.73 575.90 L104.72 575.90 L104.72 575.90 L104.71 575.91 L104.69 575.91 L104.68 575.92 L104.66 575.93 L104.65 575.95 L104.63 575.96 L104.62 575.96 L104.60 575.97 L104.59 575.97 L104.58 575.96 L104.56 575.96 L104.55 575.96 L104.53 575.96 L104.51 575.97 L104.49 575.98 L104.47 575.99 L104.45 576.00 L104.42 576.01 L104.40 576.02 L104.38 576.02 L104.36 576.03 L104.34 576.02 L104.32 576.02 L104.29 576.02 L104.27 576.02 L104.24 576.02 L104.22 576.02 L104.19 576.02 L104.16 576.02 L104.13 576.02 L104.10 576.02 L104.06 576.02 L104.03 576.03 L104.00 576.03 L103.96 576.03 L103.92 576.03 L103.88 576.02 L103.84 576.01 L103.79 575.98 L103.74 575.96 L103.69 575.93 L103.64 575.89 L103.57 575.85 L103.51 575.80 L103.43 575.74 L103.35 575.67 L103.27 575.60 L103.19 575.53 L103.10 575.44 L103.01 575.35 L102.91 575.26 L102.82 575.16 L102.71 575.05 L102.61 574.93 L102.49 574.81 L102.36 574.67 L102.23 574.52 L102.08 574.36 L101.93 574.19 L101.78 574.01 L101.62 573.82 L101.45 573.62 L101.28 573.42 L101.11 573.20 L100.93 572.97 L100.73 572.74 L100.53 572.49 L100.32 572.24 L100.10 571.98 L99.87 571.71 L99.63 571.43 L99.37 571.13 L99.10 570.81 L98.81 570.48 L98.50 570.13 L98.18 569.76 L97.85 569.37 L97.50 568.97 L97.14 568.55 L96.77 568.12 L96.39 567.68 L95.99 567.22 L95.58 566.73 L95.15 566.22 L94.70 565.66 L94.24 565.07 L93.76 564.46 L93.26 563.82 L92.75 563.14 L92.21 562.40 L91.66 561.61 L91.10 560.78 L90.52 559.94 L89.93 559.05 L89.31 558.07 L88.66 556.97 L87.97 555.70 L87.23 554.31 L86.46 552.82 L85.65 551.20 L84.81 549.43 L83.93 547.49 L83.01 545.34 L82.06 543.03 L81.07 540.58 L80.04 537.96 L78.98 535.11 L77.87 531.99 L76.70 528.55 L75.50 524.84 L74.24 520.89 L72.95 516.68 L71.60 512.15 L70.20 507.26 L68.75 501.98 L67.22 496.34 L65.62 490.37 L63.97 484.05 L62.29 477.34 L60.60 470.20 L58.92 462.61 L57.24 454.55 L55.54 446.05 L53.84 437.12 L52.13 427.79 L50.45 418.08 L48.79 408.02 L47.13 397.51 L45.46 386.49 L43.81 375.09 L42.21 363.44 L40.68 351.67 L39.27 339.89 L37.94 327.97 L36.66 315.78 L35.46 303.46 L34.37 291.15 L33.41 278.99 L32.62 267.12 L31.96 255.44 L31.41 243.81 L30.99 232.33 L30.73 221.10 L30.64 210.20 L30.75 199.74 L31.04 189.60 L31.49 179.71 L32.12 170.15 L32.93 161.03 L33.92 152.45 L35.09 144.51 L36.48 137.15 L38.07 130.29 L39.84 123.96 L41.76 118.22 L43.81 113.13 L45.96 108.73 L48.24 105.09 L50.69 102.18 L53.25 99.91 L55.91 98.20 L58.62 96.96 L61.36 96.11 L64.13 95.78 L66.98 96.05 L69.89 96.79 L72.83 97.87 L75.77 99.16 L78.70 100.51 L81.64 102.02 L84.59 103.80 L87.56 105.78 L90.51 107.90 L93.43 110.09 L96.31 112.26 L99.15 114.45 L101.95 116.72 L104.72 119.04 L107.47 121.43 L110.20 123.86 L112.92 126.33 L115.62 128.85 L118.30 131.41 L120.96 134.03 L123.60 136.69 L126.24 139.39 L128.88 142.14 L131.52 144.93 L134.15 147.77 L136.77 150.65 L139.39 153.57 L142.01 156.52 L144.62 159.50 L147.22 162.51 L149.82 165.56 L152.42 168.64 L155.01 171.75 L157.60 174.88 L160.19 178.03 L162.77 181.20 L165.36 184.39 L167.95 187.61 L170.53 190.84 L173.12 194.10 L175.71 197.36 L178.30 200.64 L180.90 203.95 L183.49 207.27 L186.09 210.60 L188.68 213.93 L191.27 217.28 L193.86 220.63 L196.44 223.99 L199.02 227.36 L201.60 230.74 L204.18 234.11 L206.75 237.48 L209.33 240.85 L211.90 244.22 L214.47 247.60 L217.04 250.97 L219.60 254.33 L222.14 257.68 L224.68 261.03 L227.21 264.38 L229.73 267.72 L232.25 271.05 L234.75 274.36 L237.23 277.66 L239.71 280.94 L242.17 284.21 L244.62 287.46 L247.06 290.70 L249.48 293.92 L251.88 297.11 L254.27 300.27 L256.64 303.42 L259.00 306.55 L261.33 309.65 L263.64 312.72 L265.93 315.75 L268.19 318.75 L270.44 321.71 L272.66 324.65 L274.86 327.55 L277.02 330.41 L279.15 333.23 L281.24 336.01 L283.31 338.76 L285.34 341.47 L287.34 344.13 L289.29 346.73 L291.19 349.27 L293.04 351.73 L294.85 354.12 L296.61 356.45 L298.33 358.73 L300.01 360.97 L301.67 363.16 L303.30 365.32 L304.89 367.44 L306.46 369.51 L307.98 371.52 L309.46 373.48 L310.89 375.37 L312.27 377.20 L313.61 378.96 L314.90 380.66 L316.15 382.30 L317.37 383.90 L318.54 385.45 L319.67 386.95 L320.77 388.40 L321.82 389.80 L322.83 391.16 L323.81 392.46 L324.76 393.73 L325.67 394.94 L326.54 396.10 L327.38 397.22 L328.18 398.29 L328.96 399.33 L329.71 400.33 L330.44 401.29 L331.14 402.20 L331.80 403.08 L332.45 403.92 L333.07 404.74 L333.67 405.54 L334.25 406.30 L334.81 407.04 L335.34 407.75 L335.85 408.44 L336.36 409.11 L336.84 409.76 L337.31 410.38 L337.74 410.95 L338.15 411.51 L338.57 412.06 L339.02 412.65 L339.50 413.29 L340.06 414.04 L340.69 414.89 L341.35 415.76 L341.98 416.60 L342.52 417.32 L342.93 417.87 L343.17 418.18 L343.28 418.31 L343.30 418.33 L343.30 418.31 L343.32 418.33 L343.41 418.44 L343.57 418.65 L343.75 418.89 L343.96 419.17 L344.18 419.47 L344.44 419.81 L344.71 420.18 L345.04 420.61 L345.41 421.10 L345.80 421.63 L346.20 422.15 L346.57 422.65 L346.89 423.08 L347.16 423.44 L347.40 423.76 L347.62 424.05 L347.82 424.32 L348.01 424.57 L348.19 424.81 L348.37 425.04 L348.52 425.26 L348.67 425.46 L348.81 425.64 L348.94 425.81 L349.06 425.97 L349.19 426.11 L349.30 426.24 L349.41 426.36 L349.51 426.46 L349.61 426.56 L349.71 426.67 L349.82 426.77 L349.93 426.87 L350.04 426.97 L350.14 427.06 L350.22 427.13 L350.28 427.19Z" fill="url(#gfy)"/><path d="M104.75 575.91 L104.74 575.90 L104.74 575.90 L104.73 575.90 L104.72 575.90 L104.72 575.90 L104.71 575.91 L104.69 575.91 L104.68 575.92 L104.66 575.93 L104.65 575.95 L104.63 575.96 L104.62 575.96 L104.60 575.97 L104.59 575.97 L104.58 575.96 L104.56 575.96 L104.55 575.96 L104.53 575.96 L104.51 575.97 L104.49 575.98 L104.47 575.99 L104.45 576.00 L104.42 576.01 L104.40 576.02 L104.38 576.02 L104.36 576.03 L104.34 576.02 L104.32 576.02 L104.29 576.02 L104.27 576.02 L104.24 576.02 L104.22 576.02 L104.19 576.02 L104.16 576.02 L104.13 576.02 L104.10 576.02 L104.06 576.02 L104.03 576.03 L104.00 576.03 L103.96 576.03 L103.92 576.03 L103.88 576.02 L103.84 576.01 L103.79 575.98 L103.74 575.96 L103.69 575.93 L103.64 575.89 L103.57 575.85 L103.51 575.80 L103.43 575.74 L103.35 575.67 L103.27 575.60 L103.19 575.53 L103.10 575.44 L103.01 575.35 L102.91 575.26 L102.82 575.16 L102.71 575.05 L102.61 574.93 L102.49 574.81 L102.36 574.67 L102.23 574.52 L102.08 574.36 L101.93 574.19 L101.78 574.01 L101.62 573.82 L101.45 573.62 L101.28 573.42 L101.11 573.20 L100.93 572.97 L100.73 572.74 L100.53 572.49 L100.32 572.24 L100.10 571.98 L99.87 571.71 L99.63 571.43 L99.37 571.13 L99.10 570.81 L98.81 570.48 L98.50 570.13 L98.18 569.76 L97.85 569.37 L97.50 568.97 L97.14 568.55 L96.77 568.12 L96.39 567.68 L95.99 567.22 L95.58 566.73 L95.15 566.22 L94.70 565.66 L94.24 565.07 L93.76 564.46 L93.26 563.82 L92.75 563.14 L92.21 562.40 L91.66 561.61 L91.10 560.78 L90.52 559.94 L89.93 559.05 L89.31 558.07 L88.66 556.97 L87.97 555.70 L87.23 554.31 L86.46 552.82 L85.65 551.20 L84.81 549.43 L83.93 547.49 L83.01 545.34 L82.06 543.03 L81.07 540.58 L80.04 537.96 L78.98 535.11 L77.87 531.99 L76.70 528.55 L75.50 524.84 L74.24 520.89 L72.95 516.68 L71.60 512.15 L70.20 507.26 L68.75 501.98 L67.22 496.34 L65.62 490.37 L63.97 484.05 L62.29 477.34 L60.60 470.20 L58.92 462.61 L57.24 454.55 L55.54 446.05 L53.84 437.12 L52.13 427.79 L50.45 418.08 L48.79 408.02 L47.13 397.51 L45.46 386.49 L43.81 375.09 L42.21 363.44 L40.68 351.67 L39.27 339.89 L37.94 327.97 L36.66 315.78 L35.46 303.46 L34.37 291.15 L33.41 278.99 L32.62 267.12 L31.96 255.44 L31.41 243.81 L30.99 232.33 L30.73 221.10 L30.64 210.20 L30.75 199.74 L31.04 189.60 L31.49 179.71 L32.12 170.15 L32.93 161.03 L33.92 152.45 L35.09 144.51 L36.48 137.15 L38.07 130.29 L39.84 123.96 L41.76 118.22 L43.81 113.13 L45.96 108.73 L48.24 105.09 L50.69 102.18 L53.25 99.91 L55.91 98.20 L58.62 96.96 L61.36 96.11 L64.13 95.78 L66.98 96.05 L69.89 96.79 L72.83 97.87 L75.77 99.16 L78.70 100.51 L81.64 102.02 L84.59 103.80 L87.56 105.78 L90.51 107.90 L93.43 110.09 L96.31 112.26 L99.15 114.45 L101.95 116.72 L104.72 119.04 L107.47 121.43 L110.20 123.86 L112.92 126.33 L115.62 128.85 L118.30 131.41 L120.96 134.03 L123.60 136.69 L126.24 139.39 L128.88 142.14 L131.52 144.93 L134.15 147.77 L136.77 150.65 L139.39 153.57 L142.01 156.52 L144.62 159.50 L147.22 162.51 L149.82 165.56 L152.42 168.64 L155.01 171.75 L157.60 174.88 L160.19 178.03 L162.77 181.20 L165.36 184.39 L167.95 187.61 L170.53 190.84 L173.12 194.10 L175.71 197.36 L178.30 200.64 L180.90 203.95 L183.49 207.27 L186.09 210.60 L188.68 213.93 L191.27 217.28 L193.86 220.63 L196.44 223.99 L199.02 227.36 L201.60 230.74 L204.18 234.11 L206.75 237.48 L209.33 240.85 L211.90 244.22 L214.47 247.60 L217.04 250.97 L219.60 254.33 L222.14 257.68 L224.68 261.03 L227.21 264.38 L229.73 267.72 L232.25 271.05 L234.75 274.36 L237.23 277.66 L239.71 280.94 L242.17 284.21 L244.62 287.46 L247.06 290.70 L249.48 293.92 L251.88 297.11 L254.27 300.27 L256.64 303.42 L259.00 306.55 L261.33 309.65 L263.64 312.72 L265.93 315.75 L268.19 318.75 L270.44 321.71 L272.66 324.65 L274.86 327.55 L277.02 330.41 L279.15 333.23 L281.24 336.01 L283.31 338.76 L285.34 341.47 L287.34 344.13 L289.29 346.73 L291.19 349.27 L293.04 351.73 L294.85 354.12 L296.61 356.45 L298.33 358.73 L300.01 360.97 L301.67 363.16 L303.30 365.32 L304.89 367.44 L306.46 369.51 L307.98 371.52 L309.46 373.48 L310.89 375.37 L312.27 377.20 L313.61 378.96 L314.90 380.66 L316.15 382.30 L317.37 383.90 L318.54 385.45 L319.67 386.95 L320.77 388.40 L321.82 389.80 L322.83 391.16 L323.81 392.46 L324.76 393.73 L325.67 394.94 L326.54 396.10 L327.38 397.22 L328.18 398.29 L328.96 399.33 L329.71 400.33 L330.44 401.29 L331.14 402.20 L331.80 403.08 L332.45 403.92 L333.07 404.74 L333.67 405.54 L334.25 406.30 L334.81 407.04 L335.34 407.75 L335.85 408.44 L336.36 409.11 L336.84 409.76 L337.31 410.38 L337.74 410.95 L338.15 411.51 L338.57 412.06 L339.02 412.65 L339.50 413.29 L340.06 414.04 L340.69 414.89 L341.35 415.76 L341.98 416.60 L342.52 417.32 L342.93 417.87 L343.17 418.18 L343.28 418.31 L343.30 418.33 L343.30 418.31 L343.32 418.33 L343.41 418.44 L343.57 418.65 L343.75 418.89 L343.96 419.17 L344.18 419.47 L344.44 419.81 L344.71 420.18 L345.04 420.61 L345.41 421.10 L345.80 421.63 L346.20 422.15 L346.57 422.65 L346.89 423.08 L347.16 423.44 L347.40 423.76 L347.62 424.05 L347.82 424.32 L348.01 424.57 L348.19 424.81 L348.37 425.04 L348.52 425.26 L348.67 425.46 L348.81 425.64 L348.94 425.81 L349.06 425.97 L349.19 426.11 L349.30 426.24 L349.41 426.36 L349.51 426.46 L349.61 426.56 L349.71 426.67 L349.82 426.77 L349.93 426.87 L350.04 426.97 L350.14 427.06 L350.22 427.13 L350.28 427.19Z" fill="url(#gfw)"/>
</svg><canvas id="cie" width="468" height="600" style="position:absolute;left:598px;top:90px"></canvas><svg style="position:absolute;left:598px;top:90px" width="468" height="600"><g stroke="#ffffff" stroke-opacity="0.55" stroke-width="1.4"><line x1="29.05" y1="57.79" x2="29.05" y2="578.80"/><line x1="29.05" y1="578.80" x2="420.37" y2="578.80"/><line x1="72.53" y1="57.79" x2="72.53" y2="578.80"/><line x1="29.05" y1="520.91" x2="420.37" y2="520.91"/><line x1="116.01" y1="57.79" x2="116.01" y2="578.80"/><line x1="29.05" y1="463.02" x2="420.37" y2="463.02"/><line x1="159.49" y1="57.79" x2="159.49" y2="578.80"/><line x1="29.05" y1="405.13" x2="420.37" y2="405.13"/><line x1="202.97" y1="57.79" x2="202.97" y2="578.80"/><line x1="29.05" y1="347.24" x2="420.37" y2="347.24"/><line x1="246.45" y1="57.79" x2="246.45" y2="578.80"/><line x1="29.05" y1="289.35" x2="420.37" y2="289.35"/><line x1="289.93" y1="57.79" x2="289.93" y2="578.80"/><line x1="29.05" y1="231.46" x2="420.37" y2="231.46"/><line x1="333.41" y1="57.79" x2="333.41" y2="578.80"/><line x1="29.05" y1="173.57" x2="420.37" y2="173.57"/><line x1="376.89" y1="57.79" x2="376.89" y2="578.80"/><line x1="29.05" y1="115.68" x2="420.37" y2="115.68"/><line x1="420.37" y1="57.79" x2="420.37" y2="578.80"/><line x1="29.05" y1="57.79" x2="420.37" y2="57.79"/></g></svg><div class="t" style="right:659.10px;text-align:right;top:664.12px;font-size:11.2px;line-height:11.2px;color:#f4f4f4;font-weight:bold;letter-spacing:-0.6px;">0.0</div>
<div class="t" style="left:427.05px;width:400px;text-align:center;top:676.92px;font-size:11.2px;line-height:11.2px;color:#f4f4f4;font-weight:bold;letter-spacing:-0.6px;">0.0</div>
<div class="t" style="right:659.10px;text-align:right;top:606.23px;font-size:11.2px;line-height:11.2px;color:#f4f4f4;font-weight:bold;letter-spacing:-0.6px;">0.1</div>
<div class="t" style="left:470.53px;width:400px;text-align:center;top:676.92px;font-size:11.2px;line-height:11.2px;color:#f4f4f4;font-weight:bold;letter-spacing:-0.6px;">0.1</div>
<div class="t" style="right:659.10px;text-align:right;top:548.34px;font-size:11.2px;line-height:11.2px;color:#f4f4f4;font-weight:bold;letter-spacing:-0.6px;">0.2</div>
<div class="t" style="left:514.01px;width:400px;text-align:center;top:676.92px;font-size:11.2px;line-height:11.2px;color:#f4f4f4;font-weight:bold;letter-spacing:-0.6px;">0.2</div>
<div class="t" style="right:659.10px;text-align:right;top:490.45px;font-size:11.2px;line-height:11.2px;color:#f4f4f4;font-weight:bold;letter-spacing:-0.6px;">0.3</div>
<div class="t" style="left:557.49px;width:400px;text-align:center;top:676.92px;font-size:11.2px;line-height:11.2px;color:#f4f4f4;font-weight:bold;letter-spacing:-0.6px;">0.3</div>
<div class="t" style="right:659.10px;text-align:right;top:432.56px;font-size:11.2px;line-height:11.2px;color:#f4f4f4;font-weight:bold;letter-spacing:-0.6px;">0.4</div>
<div class="t" style="left:600.97px;width:400px;text-align:center;top:676.92px;font-size:11.2px;line-height:11.2px;color:#f4f4f4;font-weight:bold;letter-spacing:-0.6px;">0.4</div>
<div class="t" style="right:659.10px;text-align:right;top:374.67px;font-size:11.2px;line-height:11.2px;color:#f4f4f4;font-weight:bold;letter-spacing:-0.6px;">0.5</div>
<div class="t" style="left:644.45px;width:400px;text-align:center;top:676.92px;font-size:11.2px;line-height:11.2px;color:#f4f4f4;font-weight:bold;letter-spacing:-0.6px;">0.5</div>
<div class="t" style="right:659.10px;text-align:right;top:316.78px;font-size:11.2px;line-height:11.2px;color:#f4f4f4;font-weight:bold;letter-spacing:-0.6px;">0.6</div>
<div class="t" style="left:687.93px;width:400px;text-align:center;top:676.92px;font-size:11.2px;line-height:11.2px;color:#f4f4f4;font-weight:bold;letter-spacing:-0.6px;">0.6</div>
<div class="t" style="right:659.10px;text-align:right;top:258.89px;font-size:11.2px;line-height:11.2px;color:#f4f4f4;font-weight:bold;letter-spacing:-0.6px;">0.7</div>
<div class="t" style="left:731.41px;width:400px;text-align:center;top:676.92px;font-size:11.2px;line-height:11.2px;color:#f4f4f4;font-weight:bold;letter-spacing:-0.6px;">0.7</div>
<div class="t" style="right:659.10px;text-align:right;top:201.00px;font-size:11.2px;line-height:11.2px;color:#f4f4f4;font-weight:bold;letter-spacing:-0.6px;">0.8</div>
<div class="t" style="left:774.89px;width:400px;text-align:center;top:676.92px;font-size:11.2px;line-height:11.2px;color:#f4f4f4;font-weight:bold;letter-spacing:-0.6px;">0.8</div>
<div class="t" style="right:659.10px;text-align:right;top:143.11px;font-size:11.2px;line-height:11.2px;color:#f4f4f4;font-weight:bold;letter-spacing:-0.6px;">0.9</div>
<div class="t" style="left:818.37px;width:400px;text-align:center;top:676.92px;font-size:11.2px;line-height:11.2px;color:#f4f4f4;font-weight:bold;letter-spacing:-0.6px;">0.9</div>
<div class="t" style="left:418.30px;width:400px;text-align:center;top:119.52px;font-size:11.2px;line-height:11.2px;color:#f4f4f4;font-weight:bold;">y</div>
<div class="t" style="left:839.50px;width:400px;text-align:center;top:662.32px;font-size:11.2px;line-height:11.2px;color:#f4f4f4;font-weight:bold;">x</div>
<div class="t" style="left:647.50px;top:164.72px;font-size:11.2px;line-height:11.2px;color:#1a58a4;font-weight:bold;letter-spacing:-0.6px;">520</div>
<div class="t" style="left:728.00px;top:212.02px;font-size:11.2px;line-height:11.2px;color:#1a58a4;font-weight:bold;letter-spacing:-0.6px;">540</div>
<div class="t" style="left:781.40px;top:286.52px;font-size:11.2px;line-height:11.2px;color:#1a58a4;font-weight:bold;letter-spacing:-0.6px;">560</div>
<div class="t" style="left:852.50px;top:368.72px;font-size:11.2px;line-height:11.2px;color:#1a58a4;font-weight:bold;letter-spacing:-0.6px;">580</div>
<div class="t" style="left:910.00px;top:440.12px;font-size:11.2px;line-height:11.2px;color:#1a58a4;font-weight:bold;letter-spacing:-0.6px;">600</div>
<div class="t" style="left:935.40px;top:474.22px;font-size:11.2px;line-height:11.2px;color:#1a58a4;font-weight:bold;letter-spacing:-0.6px;">620</div>
<div class="t" style="left:955.40px;top:499.12px;font-size:11.2px;line-height:11.2px;color:#1a58a4;font-weight:bold;letter-spacing:-0.6px;">700</div>
<div class="t" style="left:606.80px;top:352.92px;font-size:11.2px;line-height:11.2px;color:#1a58a4;font-weight:bold;letter-spacing:-0.6px;">500</div>
<div class="t" style="left:627.70px;top:502.32px;font-size:11.2px;line-height:11.2px;color:#1a58a4;font-weight:bold;letter-spacing:-0.6px;">490</div>
<div class="t" style="left:637.70px;top:591.42px;font-size:11.2px;line-height:11.2px;color:#1a58a4;font-weight:bold;letter-spacing:-0.6px;">480</div>
<div class="t" style="left:650.90px;top:635.32px;font-size:11.2px;line-height:11.2px;color:#1a58a4;font-weight:bold;letter-spacing:-0.6px;">470</div>
<div class="t" style="left:671.60px;top:657.92px;font-size:11.2px;line-height:11.2px;color:#1a58a4;font-weight:bold;letter-spacing:-0.6px;">460</div>
<div class="t" style="left:684.40px;top:673.02px;font-size:11.2px;line-height:11.2px;color:#1a58a4;font-weight:bold;letter-spacing:-0.6px;">380</div>
<svg style="position:absolute;left:598px;top:90px" width="468" height="600"><g stroke="#1a58a4" stroke-width="1.2"><line x1="59.6" y1="89.5" x2="59.6" y2="95.5"/><line x1="129.5" y1="135.0" x2="127.0" y2="139.5"/><line x1="194.5" y1="210.2" x2="190.4" y2="214.4"/><line x1="252.7" y1="291.2" x2="248.9" y2="296.9"/><line x1="306.0" y1="357.4" x2="302.3" y2="361.8"/><line x1="333.0" y1="396.6" x2="332.0" y2="399.6"/><line x1="354.5" y1="422.6" x2="351.5" y2="426.5"/><line x1="26.5" y1="266.7" x2="30.3" y2="266.7"/><line x1="48.0" y1="415.0" x2="51.5" y2="414.0"/><line x1="64.2" y1="503.0" x2="68.0" y2="501.0"/><line x1="79.0" y1="546.0" x2="88.7" y2="540.7"/><line x1="87.7" y1="564.2" x2="90.6" y2="561.4"/><line x1="104.7" y1="577.0" x2="103.7" y2="583.0"/></g></svg><svg style="position:absolute;left:758px;top:475px" width="12" height="12" viewBox="0 0 12 12"><circle cx="6" cy="6" r="3.6" fill="none" stroke="#1a1a1a" stroke-width="1"/><path d="M6 2.4V9.6M2.4 6H9.6" stroke="#1a1a1a" stroke-width="0.9"/></svg><div class="t" style="left:792.80px;top:695.48px;font-size:9.77px;line-height:9.77px;color:#ececec;">Luminance: 110.000 cd/m²</div>
<div class="t" style="left:783.40px;top:713.43px;font-size:10.0px;line-height:10.0px;color:#ececec;">White Point: x: 0.313&nbsp; y: 0.329</div>

<script>
(function(){
var LOC=[[104.75, 575.91], [104.74, 575.9], [104.74, 575.9], [104.73, 575.9], [104.72, 575.9], [104.72, 575.9], [104.71, 575.91], [104.69, 575.91], [104.68, 575.92], [104.66, 575.93], [104.65, 575.95], [104.63, 575.96], [104.62, 575.96], [104.6, 575.97], [104.59, 575.97], [104.58, 575.96], [104.56, 575.96], [104.55, 575.96], [104.53, 575.96], [104.51, 575.97], [104.49, 575.98], [104.47, 575.99], [104.45, 576.0], [104.42, 576.01], [104.4, 576.02], [104.38, 576.02], [104.36, 576.03], [104.34, 576.02], [104.32, 576.02], [104.29, 576.02], [104.27, 576.02], [104.24, 576.02], [104.22, 576.02], [104.19, 576.02], [104.16, 576.02], [104.13, 576.02], [104.1, 576.02], [104.06, 576.02], [104.03, 576.03], [104.0, 576.03], [103.96, 576.03], [103.92, 576.03], [103.88, 576.02], [103.84, 576.01], [103.79, 575.98], [103.74, 575.96], [103.69, 575.93], [103.64, 575.89], [103.57, 575.85], [103.51, 575.8], [103.43, 575.74], [103.35, 575.67], [103.27, 575.6], [103.19, 575.53], [103.1, 575.44], [103.01, 575.35], [102.91, 575.26], [102.82, 575.16], [102.71, 575.05], [102.61, 574.93], [102.49, 574.81], [102.36, 574.67], [102.23, 574.52], [102.08, 574.36], [101.93, 574.19], [101.78, 574.01], [101.62, 573.82], [101.45, 573.62], [101.28, 573.42], [101.11, 573.2], [100.93, 572.97], [100.73, 572.74], [100.53, 572.49], [100.32, 572.24], [100.1, 571.98], [99.87, 571.71], [99.63, 571.43], [99.37, 571.13], [99.1, 570.81], [98.81, 570.48], [98.5, 570.13], [98.18, 569.76], [97.85, 569.37], [97.5, 568.97], [97.14, 568.55], [96.77, 568.12], [96.39, 567.68], [95.99, 567.22], [95.58, 566.73], [95.15, 566.22], [94.7, 565.66], [94.24, 565.07], [93.76, 564.46], [93.26, 563.82], [92.75, 563.14], [92.21, 562.4], [91.66, 561.61], [91.1, 560.78], [90.52, 559.94], [89.93, 559.05], [89.31, 558.07], [88.66, 556.97], [87.97, 555.7], [87.23, 554.31], [86.46, 552.82], [85.65, 551.2], [84.81, 549.43], [83.93, 547.49], [83.01, 545.34], [82.06, 543.03], [81.07, 540.58], [80.04, 537.96], [78.98, 535.11], [77.87, 531.99], [76.7, 528.55], [75.5, 524.84], [74.24, 520.89], [72.95, 516.68], [71.6, 512.15], [70.2, 507.26], [68.75, 501.98], [67.22, 496.34], [65.62, 490.37], [63.97, 484.05], [62.29, 477.34], [60.6, 470.2], [58.92, 462.61], [57.24, 454.55], [55.54, 446.05], [53.84, 437.12], [52.13, 427.79], [50.45, 418.08], [48.79, 408.02], [47.13, 397.51], [45.46, 386.49], [43.81, 375.09], [42.21, 363.44], [40.68, 351.67], [39.27, 339.89], [37.94, 327.97], [36.66, 315.78], [35.46, 303.46], [34.37, 291.15], [33.41, 278.99], [32.62, 267.12], [31.96, 255.44], [31.41, 243.81], [30.99, 232.33], [30.73, 221.1], [30.64, 210.2], [30.75, 199.74], [31.04, 189.6], [31.49, 179.71], [32.12, 170.15], [32.93, 161.03], [33.92, 152.45], [35.09, 144.51], [36.48, 137.15], [38.07, 130.29], [39.84, 123.96], [41.76, 118.22], [43.81, 113.13], [45.96, 108.73], [48.24, 105.09], [50.69, 102.18], [53.25, 99.91], [55.91, 98.2], [58.62, 96.96], [61.36, 96.11], [64.13, 95.78], [66.98, 96.05], [69.89, 96.79], [72.83, 97.87], [75.77, 99.16], [78.7, 100.51], [81.64, 102.02], [84.59, 103.8], [87.56, 105.78], [90.51, 107.9], [93.43, 110.09], [96.31, 112.26], [99.15, 114.45], [101.95, 116.72], [104.72, 119.04], [107.47, 121.43], [110.2, 123.86], [112.92, 126.33], [115.62, 128.85], [118.3, 131.41], [120.96, 134.03], [123.6, 136.69], [126.24, 139.39], [128.88, 142.14], [131.52, 144.93], [134.15, 147.77], [136.77, 150.65], [139.39, 153.57], [142.01, 156.52], [144.62, 159.5], [147.22, 162.51], [149.82, 165.56], [152.42, 168.64], [155.01, 171.75], [157.6, 174.88], [160.19, 178.03], [162.77, 181.2], [165.36, 184.39], [167.95, 187.61], [170.53, 190.84], [173.12, 194.1], [175.71, 197.36], [178.3, 200.64], [180.9, 203.95], [183.49, 207.27], [186.09, 210.6], [188.68, 213.93], [191.27, 217.28], [193.86, 220.63], [196.44, 223.99], [199.02, 227.36], [201.6, 230.74], [204.18, 234.11], [206.75, 237.48], [209.33, 240.85], [211.9, 244.22], [214.47, 247.6], [217.04, 250.97], [219.6, 254.33], [222.14, 257.68], [224.68, 261.03], [227.21, 264.38], [229.73, 267.72], [232.25, 271.05], [234.75, 274.36], [237.23, 277.66], [239.71, 280.94], [242.17, 284.21], [244.62, 287.46], [247.06, 290.7], [249.48, 293.92], [251.88, 297.11], [254.27, 300.27], [256.64, 303.42], [259.0, 306.55], [261.33, 309.65], [263.64, 312.72], [265.93, 315.75], [268.19, 318.75], [270.44, 321.71], [272.66, 324.65], [274.86, 327.55], [277.02, 330.41], [279.15, 333.23], [281.24, 336.01], [283.31, 338.76], [285.34, 341.47], [287.34, 344.13], [289.29, 346.73], [291.19, 349.27], [293.04, 351.73], [294.85, 354.12], [296.61, 356.45], [298.33, 358.73], [300.01, 360.97], [301.67, 363.16], [303.3, 365.32], [304.89, 367.44], [306.46, 369.51], [307.98, 371.52], [309.46, 373.48], [310.89, 375.37], [312.27, 377.2], [313.61, 378.96], [314.9, 380.66], [316.15, 382.3], [317.37, 383.9], [318.54, 385.45], [319.67, 386.95], [320.77, 388.4], [321.82, 389.8], [322.83, 391.16], [323.81, 392.46], [324.76, 393.73], [325.67, 394.94], [326.54, 396.1], [327.38, 397.22], [328.18, 398.29], [328.96, 399.33], [329.71, 400.33], [330.44, 401.29], [331.14, 402.2], [331.8, 403.08], [332.45, 403.92], [333.07, 404.74], [333.67, 405.54], [334.25, 406.3], [334.81, 407.04], [335.34, 407.75], [335.85, 408.44], [336.36, 409.11], [336.84, 409.76], [337.31, 410.38], [337.74, 410.95], [338.15, 411.51], [338.57, 412.06], [339.02, 412.65], [339.5, 413.29], [340.06, 414.04], [340.69, 414.89], [341.35, 415.76], [341.98, 416.6], [342.52, 417.32], [342.93, 417.87], [343.17, 418.18], [343.28, 418.31], [343.3, 418.33], [343.3, 418.31], [343.32, 418.33], [343.41, 418.44], [343.57, 418.65], [343.75, 418.89], [343.96, 419.17], [344.18, 419.47], [344.44, 419.81], [344.71, 420.18], [345.04, 420.61], [345.41, 421.1], [345.8, 421.63], [346.2, 422.15], [346.57, 422.65], [346.89, 423.08], [347.16, 423.44], [347.4, 423.76], [347.62, 424.05], [347.82, 424.32], [348.01, 424.57], [348.19, 424.81], [348.37, 425.04], [348.52, 425.26], [348.67, 425.46], [348.81, 425.64], [348.94, 425.81], [349.06, 425.97], [349.19, 426.11], [349.3, 426.24], [349.41, 426.36], [349.51, 426.46], [349.61, 426.56], [349.71, 426.67], [349.82, 426.77], [349.93, 426.87], [350.04, 426.97], [350.14, 427.06], [350.22, 427.13], [350.28, 427.19]];
var TR=[[40.47, 95.85, 32.5, 170.5, 50.0, 56.67, 82.92, 35.0, 176.0, 45.0, 74.68, 87.1, 36.2, 175.8, 44.2], [26.2, 334.86, 0.0, 170.0, 150.0, 72.53, 376.18, 0.0, 170.0, 145.0, 34.99, 410.36, 0.0, 180.0, 205.0], [242.97, 439.86, 235.0, 45.0, 120.0, 210.8, 429.44, 240.0, 110.0, 170.0, 242.97, 397.03, 238.0, 65.0, 60.0], [72.53, 376.18, 0.0, 170.0, 145.0, 72.53, 434.07, 0.0, 180.0, 222.0, 34.99, 410.36, 0.0, 180.0, 205.0], [50.79, 144.62, 35.0, 170.0, 50.0, 22.62, 188.33, 10.0, 160.0, 70.0, 28.51, 132.16, 30.0, 165.0, 55.0], [50.79, 144.62, 35.0, 170.0, 50.0, 28.51, 132.16, 30.0, 165.0, 55.0, 40.47, 95.85, 32.5, 170.5, 50.0], [50.79, 144.62, 35.0, 170.0, 50.0, 40.47, 95.85, 32.5, 170.5, 50.0, 74.68, 87.1, 36.2, 175.8, 44.2], [92.93, 98.68, 37.5, 175.5, 43.5, 50.79, 144.62, 35.0, 170.0, 50.0, 74.68, 87.1, 36.2, 175.8, 44.2], [116.01, 358.82, 0.0, 170.0, 140.0, 124.27, 397.03, 0.0, 175.0, 170.0, 72.53, 376.18, 0.0, 170.0, 145.0], [124.27, 397.03, 0.0, 175.0, 170.0, 72.53, 434.07, 0.0, 180.0, 222.0, 72.53, 376.18, 0.0, 170.0, 145.0], [72.53, 434.07, 0.0, 180.0, 222.0, 124.27, 397.03, 0.0, 175.0, 170.0, 124.27, 429.44, 0.0, 180.0, 230.0], [94.27, 318.29, 0.0, 165.0, 105.0, 116.01, 260.4, 10.0, 155.0, 60.0, 137.75, 289.35, 10.0, 160.0, 80.0], [94.27, 318.29, 0.0, 165.0, 105.0, 116.01, 358.82, 0.0, 170.0, 140.0, 72.53, 376.18, 0.0, 170.0, 145.0], [300.83, 471.69, 235.0, 40.0, 70.0, 326.39, 454.83, 238.3, 40.0, 43.3, 363.98, 430.06, 240.0, 45.0, 15.0], [261.53, 286.96, 250.0, 190.0, 0.0, 211.67, 289.35, 255.0, 235.0, 0.0, 244.87, 265.92, 252.0, 215.0, 0.0], [315.44, 360.62, 242.0, 100.0, 10.0, 268.19, 376.18, 240.0, 90.0, 25.0, 304.56, 345.12, 243.5, 120.0, 5.0], [332.54, 385.18, 240.0, 75.0, 15.0, 315.44, 360.62, 242.0, 100.0, 10.0, 363.98, 430.06, 240.0, 45.0, 15.0], [232.1, 364.61, 243.0, 125.0, 70.0, 199.93, 364.61, 248.0, 175.0, 140.0, 221.23, 321.77, 250.0, 180.0, 40.0], [220.61, 521.91, 232.0, 48.0, 140.0, 202.97, 491.96, 235.0, 60.0, 150.0, 247.86, 505.55, 233.3, 42.7, 120.0], [242.97, 439.86, 235.0, 45.0, 120.0, 224.71, 451.44, 235.0, 40.0, 120.0, 210.8, 429.44, 240.0, 110.0, 170.0], [202.97, 491.96, 235.0, 60.0, 150.0, 224.71, 451.44, 235.0, 40.0, 120.0, 247.86, 505.55, 233.3, 42.7, 120.0], [224.71, 451.44, 235.0, 40.0, 120.0, 274.67, 488.7, 234.3, 40.0, 96.7, 247.86, 505.55, 233.3, 42.7, 120.0], [274.67, 488.7, 234.3, 40.0, 96.7, 224.71, 451.44, 235.0, 40.0, 120.0, 242.97, 439.86, 235.0, 45.0, 120.0], [268.19, 434.07, 235.0, 45.0, 85.0, 242.97, 439.86, 235.0, 45.0, 120.0, 242.97, 397.03, 238.0, 65.0, 60.0], [268.19, 434.07, 235.0, 45.0, 85.0, 326.39, 454.83, 238.3, 40.0, 43.3, 300.83, 471.69, 235.0, 40.0, 70.0], [274.67, 488.7, 234.3, 40.0, 96.7, 268.19, 434.07, 235.0, 45.0, 85.0, 300.83, 471.69, 235.0, 40.0, 70.0], [268.19, 434.07, 235.0, 45.0, 85.0, 274.67, 488.7, 234.3, 40.0, 96.7, 242.97, 439.86, 235.0, 45.0, 120.0], [224.71, 451.44, 235.0, 40.0, 120.0, 181.23, 463.02, 240.0, 110.0, 180.0, 210.8, 429.44, 240.0, 110.0, 170.0], [181.23, 463.02, 240.0, 110.0, 180.0, 224.71, 451.44, 235.0, 40.0, 120.0, 202.97, 491.96, 235.0, 60.0, 150.0], [137.75, 491.96, 160.0, 100.0, 195.0, 137.75, 451.44, 135.0, 140.0, 220.0, 158.62, 485.02, 215.0, 110.0, 190.0], [159.49, 520.91, 200.0, 70.0, 170.0, 137.75, 491.96, 160.0, 100.0, 195.0, 158.62, 485.02, 215.0, 110.0, 190.0], [137.75, 491.96, 160.0, 100.0, 195.0, 159.49, 520.91, 200.0, 70.0, 170.0, 129.05, 520.91, 140.0, 80.0, 190.0], [72.53, 434.07, 0.0, 180.0, 222.0, 47.45, 470.64, 0.0, 170.0, 230.0, 34.99, 410.36, 0.0, 180.0, 205.0], [94.27, 538.28, 20.0, 70.0, 180.0, 69.24, 540.39, 0.0, 95.0, 200.0, 59.69, 512.66, 0.0, 125.0, 210.0], [69.24, 540.39, 0.0, 95.0, 200.0, 94.27, 538.28, 20.0, 70.0, 180.0, 76.52, 557.74, 20.0, 70.0, 185.0], [22.62, 188.33, 10.0, 160.0, 70.0, 72.53, 260.4, 5.0, 158.0, 70.0, 22.29, 257.67, 0.0, 160.0, 95.0], [94.27, 318.29, 0.0, 165.0, 105.0, 72.53, 260.4, 5.0, 158.0, 70.0, 116.01, 260.4, 10.0, 155.0, 60.0], [50.79, 144.62, 35.0, 170.0, 50.0, 72.53, 173.57, 30.0, 165.0, 50.0, 22.62, 188.33, 10.0, 160.0, 70.0], [72.53, 173.57, 30.0, 165.0, 50.0, 72.53, 260.4, 5.0, 158.0, 70.0, 22.62, 188.33, 10.0, 160.0, 70.0], [124.27, 397.03, 0.0, 175.0, 170.0, 138.62, 420.76, 60.0, 190.0, 230.0, 124.27, 429.44, 0.0, 180.0, 230.0], [138.62, 420.76, 60.0, 190.0, 230.0, 124.27, 397.03, 0.0, 175.0, 170.0, 146.01, 397.03, 180.0, 230.0, 235.0], [131.23, 387.76, 0.0, 172.0, 160.0, 124.27, 397.03, 0.0, 175.0, 170.0, 116.01, 358.82, 0.0, 170.0, 140.0], [124.27, 397.03, 0.0, 175.0, 170.0, 131.23, 387.76, 0.0, 172.0, 160.0, 146.01, 397.03, 180.0, 230.0, 235.0], [326.39, 454.83, 238.3, 40.0, 43.3, 351.53, 438.24, 240.0, 42.5, 22.5, 363.98, 430.06, 240.0, 45.0, 15.0], [351.53, 438.24, 240.0, 42.5, 22.5, 326.39, 454.83, 238.3, 40.0, 43.3, 311.67, 405.13, 235.0, 50.0, 25.0], [199.06, 394.13, 245.0, 160.0, 170.0, 192.36, 373.7, 250.0, 180.0, 170.0, 199.93, 364.61, 248.0, 175.0, 140.0], [178.19, 364.61, 255.0, 245.0, 200.0, 192.36, 373.7, 250.0, 180.0, 170.0, 165.14, 388.34, 255.0, 255.0, 255.0], [135.14, 321.77, 0.0, 165.0, 100.0, 94.27, 318.29, 0.0, 165.0, 105.0, 137.75, 289.35, 10.0, 160.0, 80.0], [94.27, 318.29, 0.0, 165.0, 105.0, 135.14, 321.77, 0.0, 165.0, 100.0, 116.01, 358.82, 0.0, 170.0, 140.0], [192.36, 373.7, 250.0, 180.0, 170.0, 185.58, 360.21, 255.0, 240.0, 160.0, 199.93, 364.61, 248.0, 175.0, 140.0], [185.58, 360.21, 255.0, 240.0, 160.0, 192.36, 373.7, 250.0, 180.0, 170.0, 178.19, 364.61, 255.0, 245.0, 200.0], [202.97, 260.4, 220.0, 220.0, 0.0, 211.67, 289.35, 255.0, 235.0, 0.0, 181.23, 289.35, 190.0, 215.0, 50.0], [181.23, 260.4, 130.0, 195.0, 20.0, 202.97, 260.4, 220.0, 220.0, 0.0, 181.23, 289.35, 190.0, 215.0, 50.0], [211.67, 289.35, 255.0, 235.0, 0.0, 202.97, 260.4, 220.0, 220.0, 0.0, 244.87, 265.92, 252.0, 215.0, 0.0], [210.48, 223.98, 215.0, 220.0, 0.0, 202.97, 260.4, 220.0, 220.0, 0.0, 181.23, 260.4, 130.0, 195.0, 20.0], [324.83, 374.13, 241.0, 87.5, 12.5, 332.54, 385.18, 240.0, 75.0, 15.0, 311.67, 405.13, 235.0, 50.0, 25.0], [324.83, 374.13, 241.0, 87.5, 12.5, 315.44, 360.62, 242.0, 100.0, 10.0, 332.54, 385.18, 240.0, 75.0, 15.0], [242.97, 321.77, 245.0, 140.0, 20.0, 232.1, 364.61, 243.0, 125.0, 70.0, 221.23, 321.77, 250.0, 180.0, 40.0], [221.23, 397.03, 242.0, 120.0, 120.0, 199.06, 394.13, 245.0, 160.0, 170.0, 199.93, 364.61, 248.0, 175.0, 140.0], [232.1, 364.61, 243.0, 125.0, 70.0, 221.23, 397.03, 242.0, 120.0, 120.0, 199.93, 364.61, 248.0, 175.0, 140.0], [221.23, 397.03, 242.0, 120.0, 120.0, 232.1, 364.61, 243.0, 125.0, 70.0, 242.97, 397.03, 238.0, 65.0, 60.0], [210.8, 429.44, 240.0, 110.0, 170.0, 221.23, 397.03, 242.0, 120.0, 120.0, 242.97, 397.03, 238.0, 65.0, 60.0], [95.9, 585.7, 54.3, 40.0, 169.3, 98.03, 588.08, 58.6, 40.0, 168.6, 92.2, 581.65, 50.0, 40.0, 170.0], [176.01, 502.39, 230.0, 70.0, 160.0, 159.49, 520.91, 200.0, 70.0, 170.0, 158.62, 485.02, 215.0, 110.0, 190.0], [181.23, 463.02, 240.0, 110.0, 180.0, 176.01, 502.39, 230.0, 70.0, 160.0, 158.62, 485.02, 215.0, 110.0, 190.0], [176.01, 502.39, 230.0, 70.0, 160.0, 181.23, 463.02, 240.0, 110.0, 180.0, 202.97, 491.96, 235.0, 60.0, 150.0], [268.19, 376.18, 240.0, 90.0, 25.0, 289.93, 405.13, 235.0, 60.0, 40.0, 242.97, 397.03, 238.0, 65.0, 60.0], [289.93, 405.13, 235.0, 60.0, 40.0, 268.19, 434.07, 235.0, 45.0, 85.0, 242.97, 397.03, 238.0, 65.0, 60.0], [315.44, 360.62, 242.0, 100.0, 10.0, 289.93, 405.13, 235.0, 60.0, 40.0, 268.19, 376.18, 240.0, 90.0, 25.0], [326.39, 454.83, 238.3, 40.0, 43.3, 289.93, 405.13, 235.0, 60.0, 40.0, 311.67, 405.13, 235.0, 50.0, 25.0], [268.19, 434.07, 235.0, 45.0, 85.0, 289.93, 405.13, 235.0, 60.0, 40.0, 326.39, 454.83, 238.3, 40.0, 43.3], [289.93, 405.13, 235.0, 60.0, 40.0, 324.83, 374.13, 241.0, 87.5, 12.5, 311.67, 405.13, 235.0, 50.0, 25.0], [324.83, 374.13, 241.0, 87.5, 12.5, 289.93, 405.13, 235.0, 60.0, 40.0, 315.44, 360.62, 242.0, 100.0, 10.0], [137.75, 451.44, 135.0, 140.0, 220.0, 156.88, 445.65, 210.0, 160.0, 220.0, 158.62, 485.02, 215.0, 110.0, 190.0], [156.88, 445.65, 210.0, 160.0, 220.0, 181.23, 463.02, 240.0, 110.0, 180.0, 158.62, 485.02, 215.0, 110.0, 190.0], [94.27, 538.28, 20.0, 70.0, 180.0, 109.49, 509.33, 0.0, 95.0, 200.0, 129.05, 520.91, 140.0, 80.0, 190.0], [82.1, 568.42, 30.0, 57.5, 180.0, 107.31, 561.43, 60.0, 40.0, 160.0, 86.2, 574.5, 40.0, 45.0, 175.0], [94.27, 538.28, 20.0, 70.0, 180.0, 105.14, 549.85, 25.0, 60.0, 185.0, 76.52, 557.74, 20.0, 70.0, 185.0], [105.14, 549.85, 25.0, 60.0, 185.0, 82.1, 568.42, 30.0, 57.5, 180.0, 76.52, 557.74, 20.0, 70.0, 185.0], [82.1, 568.42, 30.0, 57.5, 180.0, 105.14, 549.85, 25.0, 60.0, 185.0, 107.31, 561.43, 60.0, 40.0, 160.0], [107.31, 561.43, 60.0, 40.0, 160.0, 89.54, 578.67, 45.0, 42.5, 172.5, 86.2, 574.5, 40.0, 45.0, 175.0], [89.54, 578.67, 45.0, 42.5, 172.5, 107.31, 561.43, 60.0, 40.0, 160.0, 92.2, 581.65, 50.0, 40.0, 170.0], [113.41, 582.0, 106.7, 46.0, 166.7, 95.9, 585.7, 54.3, 40.0, 169.3, 92.2, 581.65, 50.0, 40.0, 170.0], [107.31, 561.43, 60.0, 40.0, 160.0, 113.41, 582.0, 106.7, 46.0, 166.7, 92.2, 581.65, 50.0, 40.0, 170.0], [50.79, 289.35, 0.0, 160.0, 90.0, 72.53, 260.4, 5.0, 158.0, 70.0, 94.27, 318.29, 0.0, 165.0, 105.0], [50.79, 289.35, 0.0, 160.0, 90.0, 26.2, 334.86, 0.0, 170.0, 150.0, 22.29, 257.67, 0.0, 160.0, 95.0], [72.53, 260.4, 5.0, 158.0, 70.0, 50.79, 289.35, 0.0, 160.0, 90.0, 22.29, 257.67, 0.0, 160.0, 95.0], [143.37, 145.56, 45.0, 172.5, 41.0, 94.27, 144.62, 36.0, 174.0, 44.0, 126.84, 128.29, 40.0, 175.0, 42.0], [94.27, 144.62, 36.0, 174.0, 44.0, 110.19, 112.6, 38.8, 175.2, 42.8, 126.84, 128.29, 40.0, 175.0, 42.0], [94.27, 144.62, 36.0, 174.0, 44.0, 72.53, 173.57, 30.0, 165.0, 50.0, 50.79, 144.62, 35.0, 170.0, 50.0], [110.19, 112.6, 38.8, 175.2, 42.8, 94.27, 144.62, 36.0, 174.0, 44.0, 92.93, 98.68, 37.5, 175.5, 43.5], [94.27, 144.62, 36.0, 174.0, 44.0, 50.79, 144.62, 35.0, 170.0, 50.0, 92.93, 98.68, 37.5, 175.5, 43.5], [159.49, 260.4, 30.0, 165.0, 50.0, 150.79, 231.46, 30.0, 165.0, 50.0, 181.23, 260.4, 130.0, 195.0, 20.0], [159.49, 260.4, 30.0, 165.0, 50.0, 181.23, 289.35, 190.0, 215.0, 50.0, 137.75, 289.35, 10.0, 160.0, 80.0], [159.49, 260.4, 30.0, 165.0, 50.0, 181.23, 260.4, 130.0, 195.0, 20.0, 181.23, 289.35, 190.0, 215.0, 50.0], [116.01, 260.4, 10.0, 155.0, 60.0, 159.49, 260.4, 30.0, 165.0, 50.0, 137.75, 289.35, 10.0, 160.0, 80.0], [150.79, 231.46, 30.0, 165.0, 50.0, 159.49, 260.4, 30.0, 165.0, 50.0, 116.01, 260.4, 10.0, 155.0, 60.0], [202.97, 260.4, 220.0, 220.0, 0.0, 227.74, 244.85, 250.0, 230.0, 0.0, 244.87, 265.92, 252.0, 215.0, 0.0], [227.74, 244.85, 250.0, 230.0, 0.0, 202.97, 260.4, 220.0, 220.0, 0.0, 210.48, 223.98, 215.0, 220.0, 0.0], [193.39, 203.44, 160.0, 200.0, 10.0, 210.48, 223.98, 215.0, 220.0, 0.0, 181.23, 260.4, 130.0, 195.0, 20.0], [150.79, 231.46, 30.0, 165.0, 50.0, 193.39, 203.44, 160.0, 200.0, 10.0, 181.23, 260.4, 130.0, 195.0, 20.0], [116.01, 202.51, 20.0, 160.0, 55.0, 150.79, 231.46, 30.0, 165.0, 50.0, 116.01, 260.4, 10.0, 155.0, 60.0], [94.27, 144.62, 36.0, 174.0, 44.0, 116.01, 202.51, 20.0, 160.0, 55.0, 72.53, 173.57, 30.0, 165.0, 50.0], [72.53, 260.4, 5.0, 158.0, 70.0, 116.01, 202.51, 20.0, 160.0, 55.0, 116.01, 260.4, 10.0, 155.0, 60.0], [72.53, 173.57, 30.0, 165.0, 50.0, 116.01, 202.51, 20.0, 160.0, 55.0, 72.53, 260.4, 5.0, 158.0, 70.0], [159.86, 164.03, 50.0, 170.0, 40.0, 116.01, 202.51, 20.0, 160.0, 55.0, 143.37, 145.56, 45.0, 172.5, 41.0], [116.01, 202.51, 20.0, 160.0, 55.0, 94.27, 144.62, 36.0, 174.0, 44.0, 143.37, 145.56, 45.0, 172.5, 41.0], [242.97, 321.77, 245.0, 140.0, 20.0, 246.45, 364.61, 240.0, 110.0, 50.0, 232.1, 364.61, 243.0, 125.0, 70.0], [246.45, 364.61, 240.0, 110.0, 50.0, 268.19, 376.18, 240.0, 90.0, 25.0, 242.97, 397.03, 238.0, 65.0, 60.0], [232.1, 364.61, 243.0, 125.0, 70.0, 246.45, 364.61, 240.0, 110.0, 50.0, 242.97, 397.03, 238.0, 65.0, 60.0], [176.01, 502.39, 230.0, 70.0, 160.0, 193.28, 537.61, 220.7, 56.0, 156.7, 159.49, 520.91, 200.0, 70.0, 170.0], [193.28, 537.61, 220.7, 56.0, 156.7, 166.22, 552.73, 196.7, 59.3, 166.7, 159.49, 520.91, 200.0, 70.0, 170.0], [220.61, 521.91, 232.0, 48.0, 140.0, 193.28, 537.61, 220.7, 56.0, 156.7, 202.97, 491.96, 235.0, 60.0, 150.0], [193.28, 537.61, 220.7, 56.0, 156.7, 176.01, 502.39, 230.0, 70.0, 160.0, 202.97, 491.96, 235.0, 60.0, 150.0], [146.01, 429.44, 140.0, 200.0, 240.0, 156.88, 445.65, 210.0, 160.0, 220.0, 137.75, 451.44, 135.0, 140.0, 220.0], [146.01, 429.44, 140.0, 200.0, 240.0, 137.75, 451.44, 135.0, 140.0, 220.0, 124.27, 429.44, 0.0, 180.0, 230.0], [138.62, 420.76, 60.0, 190.0, 230.0, 146.01, 429.44, 140.0, 200.0, 240.0, 124.27, 429.44, 0.0, 180.0, 230.0], [192.53, 420.76, 240.0, 130.0, 180.0, 221.23, 397.03, 242.0, 120.0, 120.0, 210.8, 429.44, 240.0, 110.0, 170.0], [221.23, 397.03, 242.0, 120.0, 120.0, 192.53, 420.76, 240.0, 130.0, 180.0, 199.06, 394.13, 245.0, 160.0, 170.0], [118.18, 509.33, 135.0, 100.0, 200.0, 137.75, 491.96, 160.0, 100.0, 195.0, 129.05, 520.91, 140.0, 80.0, 190.0], [109.49, 509.33, 0.0, 95.0, 200.0, 118.18, 509.33, 135.0, 100.0, 200.0, 129.05, 520.91, 140.0, 80.0, 190.0], [111.66, 463.02, 0.0, 130.0, 215.0, 72.53, 434.07, 0.0, 180.0, 222.0, 124.27, 429.44, 0.0, 180.0, 230.0], [105.14, 549.85, 25.0, 60.0, 185.0, 111.66, 549.85, 110.0, 60.0, 180.0, 107.31, 561.43, 60.0, 40.0, 160.0], [111.66, 549.85, 110.0, 60.0, 180.0, 94.27, 538.28, 20.0, 70.0, 180.0, 129.05, 520.91, 140.0, 80.0, 190.0], [111.66, 549.85, 110.0, 60.0, 180.0, 105.14, 549.85, 25.0, 60.0, 185.0, 94.27, 538.28, 20.0, 70.0, 180.0], [100.46, 589.23, 80.0, 40.0, 165.0, 98.03, 588.08, 58.6, 40.0, 168.6, 95.9, 585.7, 54.3, 40.0, 169.3], [113.41, 582.0, 106.7, 46.0, 166.7, 100.46, 589.23, 80.0, 40.0, 165.0, 95.9, 585.7, 54.3, 40.0, 169.3], [99.21, 589.15, 62.9, 40.0, 167.9, 100.46, 589.23, 80.0, 40.0, 165.0, 100.09, 589.34, 71.4, 40.0, 166.4], [98.03, 588.08, 58.6, 40.0, 168.6, 100.46, 589.23, 80.0, 40.0, 165.0, 99.21, 589.15, 62.9, 40.0, 167.9], [50.79, 289.35, 0.0, 160.0, 90.0, 50.79, 318.29, 0.0, 163.0, 105.0, 26.2, 334.86, 0.0, 170.0, 150.0], [50.79, 318.29, 0.0, 163.0, 105.0, 50.79, 289.35, 0.0, 160.0, 90.0, 94.27, 318.29, 0.0, 165.0, 105.0], [26.2, 334.86, 0.0, 170.0, 150.0, 50.79, 318.29, 0.0, 163.0, 105.0, 72.53, 376.18, 0.0, 170.0, 145.0], [50.79, 318.29, 0.0, 163.0, 105.0, 94.27, 318.29, 0.0, 165.0, 105.0, 72.53, 376.18, 0.0, 170.0, 145.0], [135.14, 364.61, 0.0, 165.0, 130.0, 131.23, 387.76, 0.0, 172.0, 160.0, 116.01, 358.82, 0.0, 170.0, 140.0], [351.53, 438.24, 240.0, 42.5, 22.5, 363.42, 429.51, 239.8, 46.2, 15.6, 363.98, 430.06, 240.0, 45.0, 15.0], [362.78, 428.78, 239.5, 47.5, 16.2, 363.42, 429.51, 239.8, 46.2, 15.6, 351.53, 438.24, 240.0, 42.5, 22.5], [332.54, 385.18, 240.0, 75.0, 15.0, 338.75, 394.2, 239.0, 65.0, 17.5, 311.67, 405.13, 235.0, 50.0, 25.0], [338.75, 394.2, 239.0, 65.0, 17.5, 332.54, 385.18, 240.0, 75.0, 15.0, 363.98, 430.06, 240.0, 45.0, 15.0], [347.6, 406.96, 238.1, 54.4, 19.7, 338.75, 394.2, 239.0, 65.0, 17.5, 363.98, 430.06, 240.0, 45.0, 15.0], [350.74, 411.49, 238.2, 53.8, 19.4, 351.53, 438.24, 240.0, 42.5, 22.5, 311.67, 405.13, 235.0, 50.0, 25.0], [347.6, 406.96, 238.1, 54.4, 19.7, 350.74, 411.49, 238.2, 53.8, 19.4, 311.67, 405.13, 235.0, 50.0, 25.0], [350.74, 411.49, 238.2, 53.8, 19.4, 347.6, 406.96, 238.1, 54.4, 19.7, 363.98, 430.06, 240.0, 45.0, 15.0], [178.19, 321.77, 230.0, 240.0, 130.0, 195.58, 321.77, 255.0, 235.0, 60.0, 185.58, 360.21, 255.0, 240.0, 160.0], [199.93, 364.61, 248.0, 175.0, 140.0, 195.58, 321.77, 255.0, 235.0, 60.0, 221.23, 321.77, 250.0, 180.0, 40.0], [185.58, 360.21, 255.0, 240.0, 160.0, 195.58, 321.77, 255.0, 235.0, 60.0, 199.93, 364.61, 248.0, 175.0, 140.0], [195.58, 321.77, 255.0, 235.0, 60.0, 211.67, 289.35, 255.0, 235.0, 0.0, 221.23, 321.77, 250.0, 180.0, 40.0], [211.67, 289.35, 255.0, 235.0, 0.0, 195.58, 321.77, 255.0, 235.0, 60.0, 181.23, 289.35, 190.0, 215.0, 50.0], [195.58, 321.77, 255.0, 235.0, 60.0, 178.19, 321.77, 230.0, 240.0, 130.0, 181.23, 289.35, 190.0, 215.0, 50.0], [158.62, 353.61, 200.0, 235.0, 210.0, 185.58, 360.21, 255.0, 240.0, 160.0, 178.19, 364.61, 255.0, 245.0, 200.0], [158.62, 353.61, 200.0, 235.0, 210.0, 178.19, 321.77, 230.0, 240.0, 130.0, 185.58, 360.21, 255.0, 240.0, 160.0], [176.48, 183.38, 90.0, 185.0, 25.0, 193.39, 203.44, 160.0, 200.0, 10.0, 150.79, 231.46, 30.0, 165.0, 50.0], [116.01, 202.51, 20.0, 160.0, 55.0, 176.48, 183.38, 90.0, 185.0, 25.0, 150.79, 231.46, 30.0, 165.0, 50.0], [176.48, 183.38, 90.0, 185.0, 25.0, 116.01, 202.51, 20.0, 160.0, 55.0, 159.86, 164.03, 50.0, 170.0, 40.0], [291.75, 327.14, 245.0, 140.0, 0.0, 246.45, 364.61, 240.0, 110.0, 50.0, 242.97, 321.77, 245.0, 140.0, 20.0], [268.19, 376.18, 240.0, 90.0, 25.0, 291.75, 327.14, 245.0, 140.0, 0.0, 304.56, 345.12, 243.5, 120.0, 5.0], [246.45, 364.61, 240.0, 110.0, 50.0, 291.75, 327.14, 245.0, 140.0, 0.0, 268.19, 376.18, 240.0, 90.0, 25.0], [156.88, 445.65, 210.0, 160.0, 220.0, 178.19, 429.44, 245.0, 180.0, 215.0, 181.23, 463.02, 240.0, 110.0, 180.0], [181.23, 463.02, 240.0, 110.0, 180.0, 178.19, 429.44, 245.0, 180.0, 215.0, 210.8, 429.44, 240.0, 110.0, 170.0], [178.19, 429.44, 245.0, 180.0, 215.0, 192.53, 420.76, 240.0, 130.0, 180.0, 210.8, 429.44, 240.0, 110.0, 170.0], [192.53, 420.76, 240.0, 130.0, 180.0, 189.06, 397.03, 248.0, 185.0, 195.0, 199.06, 394.13, 245.0, 160.0, 170.0], [192.36, 373.7, 250.0, 180.0, 170.0, 189.06, 397.03, 248.0, 185.0, 195.0, 165.14, 388.34, 255.0, 255.0, 255.0], [189.06, 397.03, 248.0, 185.0, 195.0, 192.36, 373.7, 250.0, 180.0, 170.0, 199.06, 394.13, 245.0, 160.0, 170.0], [137.75, 491.96, 160.0, 100.0, 195.0, 122.53, 463.02, 125.0, 140.0, 220.0, 137.75, 451.44, 135.0, 140.0, 220.0], [111.66, 463.02, 0.0, 130.0, 215.0, 122.53, 463.02, 125.0, 140.0, 220.0, 137.75, 491.96, 160.0, 100.0, 195.0], [137.75, 451.44, 135.0, 140.0, 220.0, 122.53, 463.02, 125.0, 140.0, 220.0, 124.27, 429.44, 0.0, 180.0, 230.0], [122.53, 463.02, 125.0, 140.0, 220.0, 111.66, 463.02, 0.0, 130.0, 215.0, 124.27, 429.44, 0.0, 180.0, 230.0], [118.18, 509.33, 135.0, 100.0, 200.0, 94.27, 491.96, 0.0, 120.0, 210.0, 137.75, 491.96, 160.0, 100.0, 195.0], [94.27, 491.96, 0.0, 120.0, 210.0, 111.66, 463.02, 0.0, 130.0, 215.0, 137.75, 491.96, 160.0, 100.0, 195.0], [94.27, 491.96, 0.0, 120.0, 210.0, 118.18, 509.33, 135.0, 100.0, 200.0, 109.49, 509.33, 0.0, 95.0, 200.0], [94.27, 491.96, 0.0, 120.0, 210.0, 94.27, 538.28, 20.0, 70.0, 180.0, 59.69, 512.66, 0.0, 125.0, 210.0], [94.27, 491.96, 0.0, 120.0, 210.0, 109.49, 509.33, 0.0, 95.0, 200.0, 94.27, 538.28, 20.0, 70.0, 180.0], [47.45, 470.64, 0.0, 170.0, 230.0, 94.27, 491.96, 0.0, 120.0, 210.0, 59.69, 512.66, 0.0, 125.0, 210.0], [94.27, 491.96, 0.0, 120.0, 210.0, 47.45, 470.64, 0.0, 170.0, 230.0, 72.53, 434.07, 0.0, 180.0, 222.0], [111.66, 463.02, 0.0, 130.0, 215.0, 94.27, 491.96, 0.0, 120.0, 210.0, 72.53, 434.07, 0.0, 180.0, 222.0], [100.46, 589.23, 80.0, 40.0, 165.0, 139.6, 567.46, 160.0, 58.0, 170.0, 166.22, 552.73, 196.7, 59.3, 166.7], [139.6, 567.46, 160.0, 58.0, 170.0, 100.46, 589.23, 80.0, 40.0, 165.0, 113.41, 582.0, 106.7, 46.0, 166.7], [139.6, 567.46, 160.0, 58.0, 170.0, 113.41, 582.0, 106.7, 46.0, 166.7, 107.31, 561.43, 60.0, 40.0, 160.0], [111.66, 549.85, 110.0, 60.0, 180.0, 139.6, 567.46, 160.0, 58.0, 170.0, 107.31, 561.43, 60.0, 40.0, 160.0], [135.14, 364.61, 0.0, 165.0, 130.0, 145.14, 373.87, 100.0, 200.0, 180.0, 131.23, 387.76, 0.0, 172.0, 160.0], [145.14, 373.87, 100.0, 200.0, 180.0, 135.14, 364.61, 0.0, 165.0, 130.0, 146.01, 364.61, 90.0, 195.0, 165.0], [131.23, 387.76, 0.0, 172.0, 160.0, 145.14, 373.87, 100.0, 200.0, 180.0, 146.01, 397.03, 180.0, 230.0, 235.0], [146.01, 397.03, 180.0, 230.0, 235.0, 145.14, 373.87, 100.0, 200.0, 180.0, 165.14, 388.34, 255.0, 255.0, 255.0], [343.68, 401.34, 238.0, 55.0, 20.0, 347.6, 406.96, 238.1, 54.4, 19.7, 311.67, 405.13, 235.0, 50.0, 25.0], [338.75, 394.2, 239.0, 65.0, 17.5, 343.68, 401.34, 238.0, 55.0, 20.0, 311.67, 405.13, 235.0, 50.0, 25.0], [343.68, 401.34, 238.0, 55.0, 20.0, 338.75, 394.2, 239.0, 65.0, 17.5, 347.6, 406.96, 238.1, 54.4, 19.7], [156.88, 364.61, 220.0, 240.0, 225.0, 158.62, 353.61, 200.0, 235.0, 210.0, 178.19, 364.61, 255.0, 245.0, 200.0], [158.62, 353.61, 200.0, 235.0, 210.0, 156.88, 364.61, 220.0, 240.0, 225.0, 146.01, 364.61, 90.0, 195.0, 165.0], [156.88, 364.61, 220.0, 240.0, 225.0, 145.14, 373.87, 100.0, 200.0, 180.0, 146.01, 364.61, 90.0, 195.0, 165.0], [156.88, 364.61, 220.0, 240.0, 225.0, 178.19, 364.61, 255.0, 245.0, 200.0, 165.14, 388.34, 255.0, 255.0, 255.0], [145.14, 373.87, 100.0, 200.0, 180.0, 156.88, 364.61, 220.0, 240.0, 225.0, 165.14, 388.34, 255.0, 255.0, 255.0], [158.62, 353.61, 200.0, 235.0, 210.0, 156.88, 321.77, 120.0, 200.0, 120.0, 178.19, 321.77, 230.0, 240.0, 130.0], [156.88, 321.77, 120.0, 200.0, 120.0, 135.14, 321.77, 0.0, 165.0, 100.0, 137.75, 289.35, 10.0, 160.0, 80.0], [181.23, 289.35, 190.0, 215.0, 50.0, 156.88, 321.77, 120.0, 200.0, 120.0, 137.75, 289.35, 10.0, 160.0, 80.0], [178.19, 321.77, 230.0, 240.0, 130.0, 156.88, 321.77, 120.0, 200.0, 120.0, 181.23, 289.35, 190.0, 215.0, 50.0], [135.14, 364.61, 0.0, 165.0, 130.0, 138.62, 353.61, 40.0, 180.0, 150.0, 146.01, 364.61, 90.0, 195.0, 165.0], [138.62, 353.61, 40.0, 180.0, 150.0, 158.62, 353.61, 200.0, 235.0, 210.0, 146.01, 364.61, 90.0, 195.0, 165.0], [138.62, 353.61, 40.0, 180.0, 150.0, 135.14, 364.61, 0.0, 165.0, 130.0, 116.01, 358.82, 0.0, 170.0, 140.0], [291.75, 327.14, 245.0, 140.0, 0.0, 246.45, 318.29, 245.0, 150.0, 10.0, 277.29, 307.57, 247.5, 165.0, 0.0], [246.45, 318.29, 245.0, 150.0, 10.0, 291.75, 327.14, 245.0, 140.0, 0.0, 242.97, 321.77, 245.0, 140.0, 20.0], [246.45, 318.29, 245.0, 150.0, 10.0, 261.53, 286.96, 250.0, 190.0, 0.0, 277.29, 307.57, 247.5, 165.0, 0.0], [261.53, 286.96, 250.0, 190.0, 0.0, 246.45, 318.29, 245.0, 150.0, 10.0, 211.67, 289.35, 255.0, 235.0, 0.0], [211.67, 289.35, 255.0, 235.0, 0.0, 246.45, 318.29, 245.0, 150.0, 10.0, 221.23, 321.77, 250.0, 180.0, 40.0], [246.45, 318.29, 245.0, 150.0, 10.0, 242.97, 321.77, 245.0, 140.0, 20.0, 221.23, 321.77, 250.0, 180.0, 40.0], [146.01, 429.44, 140.0, 200.0, 240.0, 152.1, 420.76, 150.0, 175.0, 235.0, 156.88, 445.65, 210.0, 160.0, 220.0], [152.1, 420.76, 150.0, 175.0, 235.0, 178.19, 429.44, 245.0, 180.0, 215.0, 156.88, 445.65, 210.0, 160.0, 220.0], [152.1, 420.76, 150.0, 175.0, 235.0, 138.62, 420.76, 60.0, 190.0, 230.0, 146.01, 397.03, 180.0, 230.0, 235.0], [152.1, 420.76, 150.0, 175.0, 235.0, 146.01, 429.44, 140.0, 200.0, 240.0, 138.62, 420.76, 60.0, 190.0, 230.0], [139.6, 567.46, 160.0, 58.0, 170.0, 137.75, 549.85, 150.0, 60.0, 170.0, 166.22, 552.73, 196.7, 59.3, 166.7], [159.49, 520.91, 200.0, 70.0, 170.0, 137.75, 549.85, 150.0, 60.0, 170.0, 129.05, 520.91, 140.0, 80.0, 190.0], [166.22, 552.73, 196.7, 59.3, 166.7, 137.75, 549.85, 150.0, 60.0, 170.0, 159.49, 520.91, 200.0, 70.0, 170.0], [137.75, 549.85, 150.0, 60.0, 170.0, 111.66, 549.85, 110.0, 60.0, 180.0, 129.05, 520.91, 140.0, 80.0, 190.0], [137.75, 549.85, 150.0, 60.0, 170.0, 139.6, 567.46, 160.0, 58.0, 170.0, 111.66, 549.85, 110.0, 60.0, 180.0], [350.74, 411.49, 238.2, 53.8, 19.4, 353.36, 415.28, 238.4, 53.1, 19.1, 351.53, 438.24, 240.0, 42.5, 22.5], [353.36, 415.28, 238.4, 53.1, 19.1, 356.74, 420.16, 238.5, 52.5, 18.8, 351.53, 438.24, 240.0, 42.5, 22.5], [353.36, 415.28, 238.4, 53.1, 19.1, 350.74, 411.49, 238.2, 53.8, 19.4, 363.98, 430.06, 240.0, 45.0, 15.0], [139.92, 335.66, 0.0, 168.0, 120.0, 156.88, 321.77, 120.0, 200.0, 120.0, 158.62, 353.61, 200.0, 235.0, 210.0], [138.62, 353.61, 40.0, 180.0, 150.0, 139.92, 335.66, 0.0, 168.0, 120.0, 158.62, 353.61, 200.0, 235.0, 210.0], [156.88, 321.77, 120.0, 200.0, 120.0, 139.92, 335.66, 0.0, 168.0, 120.0, 135.14, 321.77, 0.0, 165.0, 100.0], [135.14, 321.77, 0.0, 165.0, 100.0, 139.92, 335.66, 0.0, 168.0, 120.0, 116.01, 358.82, 0.0, 170.0, 140.0], [139.92, 335.66, 0.0, 168.0, 120.0, 138.62, 353.61, 40.0, 180.0, 150.0, 116.01, 358.82, 0.0, 170.0, 140.0], [152.1, 420.76, 150.0, 175.0, 235.0, 172.1, 413.81, 245.0, 200.0, 225.0, 178.19, 429.44, 245.0, 180.0, 215.0], [189.06, 397.03, 248.0, 185.0, 195.0, 172.1, 413.81, 245.0, 200.0, 225.0, 165.14, 388.34, 255.0, 255.0, 255.0], [172.1, 413.81, 245.0, 200.0, 225.0, 146.01, 397.03, 180.0, 230.0, 235.0, 165.14, 388.34, 255.0, 255.0, 255.0], [172.1, 413.81, 245.0, 200.0, 225.0, 152.1, 420.76, 150.0, 175.0, 235.0, 146.01, 397.03, 180.0, 230.0, 235.0], [178.19, 429.44, 245.0, 180.0, 215.0, 172.1, 413.81, 245.0, 200.0, 225.0, 192.53, 420.76, 240.0, 130.0, 180.0], [172.1, 413.81, 245.0, 200.0, 225.0, 189.06, 397.03, 248.0, 185.0, 195.0, 192.53, 420.76, 240.0, 130.0, 180.0], [361.92, 427.55, 239.2, 48.8, 16.9, 362.78, 428.78, 239.5, 47.5, 16.2, 351.53, 438.24, 240.0, 42.5, 22.5], [360.64, 425.7, 239.0, 50.0, 17.5, 361.92, 427.55, 239.2, 48.8, 16.9, 351.53, 438.24, 240.0, 42.5, 22.5], [361.92, 427.55, 239.2, 48.8, 16.9, 360.64, 425.7, 239.0, 50.0, 17.5, 363.98, 430.06, 240.0, 45.0, 15.0], [363.42, 429.51, 239.8, 46.2, 15.6, 361.92, 427.55, 239.2, 48.8, 16.9, 363.98, 430.06, 240.0, 45.0, 15.0], [361.92, 427.55, 239.2, 48.8, 16.9, 363.42, 429.51, 239.8, 46.2, 15.6, 362.78, 428.78, 239.5, 47.5, 16.2], [358.5, 422.63, 238.8, 51.2, 18.1, 360.64, 425.7, 239.0, 50.0, 17.5, 351.53, 438.24, 240.0, 42.5, 22.5], [360.64, 425.7, 239.0, 50.0, 17.5, 358.5, 422.63, 238.8, 51.2, 18.1, 363.98, 430.06, 240.0, 45.0, 15.0], [356.74, 420.16, 238.5, 52.5, 18.8, 357.21, 420.78, 238.6, 51.9, 18.4, 351.53, 438.24, 240.0, 42.5, 22.5], [357.21, 420.78, 238.6, 51.9, 18.4, 358.5, 422.63, 238.8, 51.2, 18.1, 351.53, 438.24, 240.0, 42.5, 22.5], [353.36, 415.28, 238.4, 53.1, 19.1, 357.21, 420.78, 238.6, 51.9, 18.4, 356.74, 420.16, 238.5, 52.5, 18.8], [357.21, 420.78, 238.6, 51.9, 18.4, 353.36, 415.28, 238.4, 53.1, 19.1, 363.98, 430.06, 240.0, 45.0, 15.0], [358.5, 422.63, 238.8, 51.2, 18.1, 357.21, 420.78, 238.6, 51.9, 18.4, 363.98, 430.06, 240.0, 45.0, 15.0]];
var W=468,H=600;
var cv=document.getElementById('cie');var ctx=cv.getContext('2d');
var off=document.createElement('canvas');off.width=W;off.height=H;var oc=off.getContext('2d');
var img=oc.createImageData(W,H);var d=img.data;
for(var t=0;t<TR.length;t++){
  var T=TR[t];
  var x0=T[0],y0=T[1],x1=T[5],y1=T[6],x2=T[10],y2=T[11];
  var den=(y1-y2)*(x0-x2)+(x2-x1)*(y0-y2);
  if(Math.abs(den)<1e-9) continue;
  var minx=Math.max(0,Math.floor(Math.min(x0,x1,x2))),maxx=Math.min(W-1,Math.ceil(Math.max(x0,x1,x2)));
  var miny=Math.max(0,Math.floor(Math.min(y0,y1,y2))),maxy=Math.min(H-1,Math.ceil(Math.max(y0,y1,y2)));
  for(var j=miny;j<=maxy;j++){for(var i=minx;i<=maxx;i++){
    var px=i+0.5,py=j+0.5;
    var a=((y1-y2)*(px-x2)+(x2-x1)*(py-y2))/den;
    var b=((y2-y0)*(px-x2)+(x0-x2)*(py-y2))/den;
    var c=1-a-b;
    if(a<-0.002||b<-0.002||c<-0.002) continue;
    var k=(j*W+i)*4;
    d[k]=a*T[2]+b*T[7]+c*T[12];d[k+1]=a*T[3]+b*T[8]+c*T[13];d[k+2]=a*T[4]+b*T[9]+c*T[14];d[k+3]=255;
  }}
}
oc.putImageData(img,0,0);
var off2=document.createElement('canvas');off2.width=W;off2.height=H;var oc2=off2.getContext('2d');oc2.filter='blur(3.5px)';oc2.drawImage(off,0,0);off=off2;
ctx.beginPath();ctx.moveTo(LOC[0][0],LOC[0][1]);for(var m=1;m<LOC.length;m++)ctx.lineTo(LOC[m][0],LOC[m][1]);ctx.closePath();
ctx.save();ctx.clip();ctx.drawImage(off,0,0);ctx.restore();
})();
</script>
</body></html>
